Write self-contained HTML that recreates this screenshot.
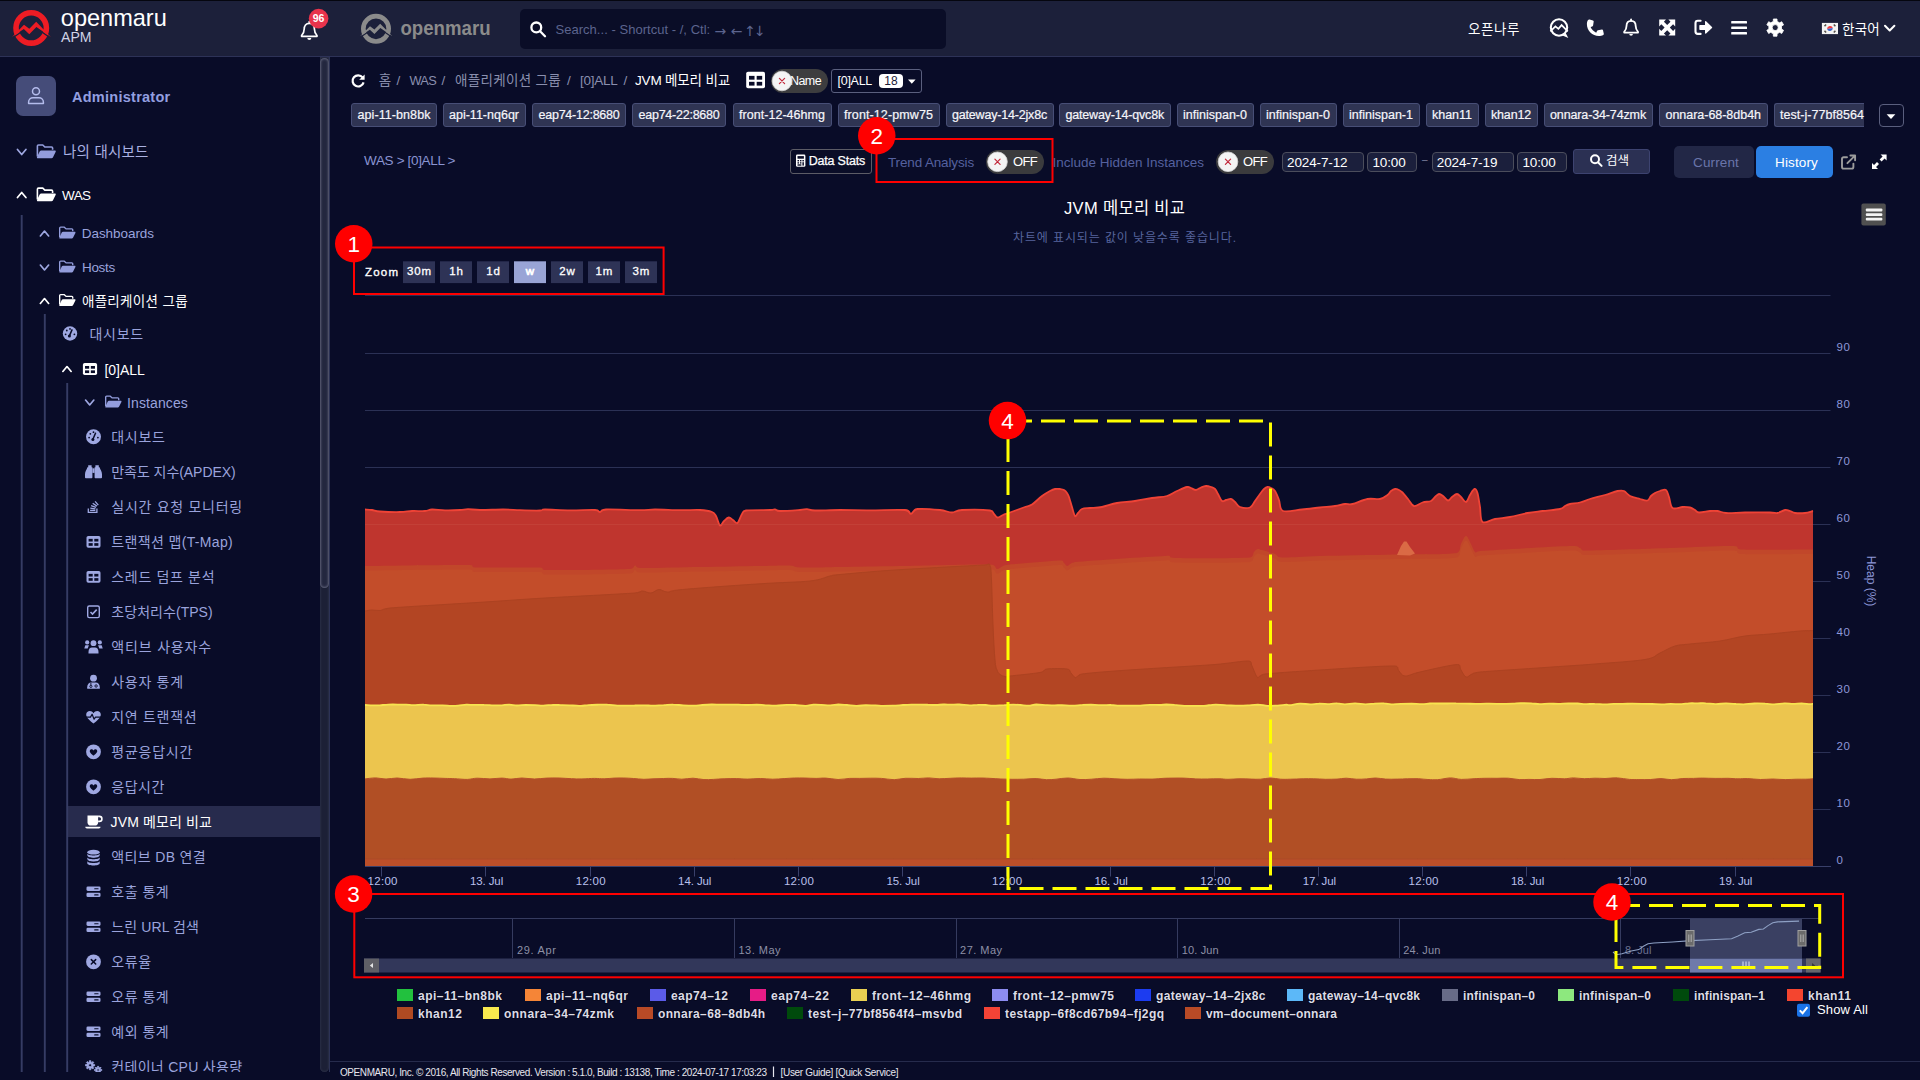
<!DOCTYPE html>
<html lang="ko"><head><meta charset="utf-8"><title>OPENMARU APM - JVM 메모리 비교</title>
<style>
html,body{margin:0;padding:0;}
body{width:1920px;height:1080px;overflow:hidden;background:#090c28;font-family:"Liberation Sans","Noto Sans CJK KR",sans-serif;position:relative;}
.t{position:absolute;white-space:nowrap;display:block;}
.b{position:absolute;box-sizing:border-box;display:block;}
svg text{font-family:"Liberation Sans","Noto Sans CJK KR",sans-serif;}
</style></head>
<body>
<div class="b " style="left:0.00px;top:0.00px;width:1920.00px;height:57.00px;background:#1c203a;border-top:1px solid #05060f;border-bottom:1px solid #2d3257;"></div>
<div class="b " style="left:520.00px;top:9.00px;width:426.00px;height:39.50px;background:#0a0d27;border-radius:5px;"></div>
<span class="t" id="t1" style="top:22.93px;font-size:13px;line-height:13px;color:#5c648e;letter-spacing:0.029px;left:555.50px;">Search... - Shortcut - /, Ctl:</span>
<span class="t" id="t2" style="top:23.54px;font-size:14px;line-height:14px;color:#5c648e;font-family:'DejaVu Sans',sans-serif;left:714.60px;">→ ← <span style="margin-left:-2.7px">↑</span> <span style="margin-left:-6.4px">↓</span></span>
<span class="t" id="t3" style="top:22.98px;font-size:13.5px;line-height:13.5px;color:#ffffff;letter-spacing:0.578px;left:1468.00px;">오픈나루</span>
<span class="t" id="t4" style="top:23.09px;font-size:13.5px;line-height:13.5px;color:#ffffff;letter-spacing:0.245px;left:1842.00px;">한국어</span>
<svg class="b" style="left:0;top:0" width="1920" height="57" viewBox="0 0 1920 57"><g transform="translate(31.20 27.90)"><circle cx="0" cy="0" r="15.20" fill="none" stroke="#ed1c24" stroke-width="5.60"/><path d="M-18.80,10.10 L-7.40,2.40 L-1.90,7.50 L5.20,0.20 L19.30,10.10" fill="none" stroke="#1c203a" stroke-width="1.30"/><path d="M-19.20,9.00 L-7.20,-3.20 L-1.90,0.80 L5.00,-6.10 L19.70,9.00 L5.20,-1.00 L-1.90,6.30 L-7.40,1.20 Z" fill="#ed1c24"/></g><g transform="translate(376.00 28.80)"><circle cx="0" cy="0" r="12.67" fill="none" stroke="#8b8b8b" stroke-width="4.67"/><path d="M-15.67,8.42 L-6.17,2.00 L-1.58,6.25 L4.33,0.17 L16.08,8.42" fill="none" stroke="#1c203a" stroke-width="1.08"/><path d="M-16.00,7.50 L-6.00,-2.67 L-1.58,0.67 L4.17,-5.08 L16.42,7.50 L4.33,-0.83 L-1.58,5.25 L-6.17,1.00 Z" fill="#8b8b8b"/></g><text x="60.8" y="25.8" font-size="23.4" fill="#ffffff" textLength="106" lengthAdjust="spacingAndGlyphs">openmaru</text><text x="61" y="42" font-size="14.6" fill="#d0d3e6" textLength="30.5" lengthAdjust="spacingAndGlyphs">APM</text><text x="400.5" y="35" font-size="21" font-weight="700" fill="#8b8b8b" textLength="90" lengthAdjust="spacingAndGlyphs">openmaru</text><g transform="translate(300.30 20.60) scale(1.000)" fill="none" stroke="#fff" stroke-width="1.70" stroke-linejoin="round" stroke-linecap="round"><path d="M9 1 V2.6"/><path d="M9 2.7 C5.7 2.7 3.9 5.3 3.9 8.5 C3.9 12 2.7 13.5 1.3 14.9 V15.7 H16.7 V14.9 C15.3 13.5 14.1 12 14.1 8.5 C14.1 5.3 12.3 2.7 9 2.7 Z"/><path d="M7 17.3 A2 2 0 0 0 11 17.3 Z" fill="#fff" stroke="none"/></g><circle cx="318.6" cy="18.6" r="9.8" fill="#e8334c"/><text x="318.6" y="22.2" font-size="10.5" font-weight="700" fill="#fff" text-anchor="middle">96</text><g fill="none" stroke="#fff" stroke-width="2.3" stroke-linecap="round"><circle cx="536.3" cy="27.4" r="4.9"/><path d="M540.1 31.3 L545 36.2"/></g><g transform="translate(1559.00 28.30)"><circle cx="0" cy="-0.8" r="8.20" fill="none" stroke="#fff" stroke-width="2.1"/><path d="M3.5 7.2 L9.3 9.6 L6.7 4.6 Z" fill="#fff"/><path d="M-8.6 3 L-3.6 -2 L-0.6 0.6 L2.6 -3.2 L8.8 3" fill="none" stroke="#fff" stroke-width="1.7" stroke-linejoin="miter"/></g><path transform="translate(1586 19.2) scale(1.0)" d="M3.6 0.4 L7 1.2 C7.5 1.3 7.8 1.8 7.7 2.3 L7.1 6.2 C7 6.7 6.7 7 6.3 7.2 L4.6 7.9 C5.6 10.4 7.6 12.4 10.2 13.5 L11 11.8 C11.2 11.4 11.6 11.1 12 11 L15.9 10.4 C16.4 10.3 16.9 10.6 17 11.1 L17.8 14.5 C17.9 15 17.7 15.5 17.2 15.7 C15.9 16.4 14.4 16.9 12.9 16.9 C6.2 16.9 0.9 11.5 0.9 4.9 C0.9 3.4 1.3 1.9 2.1 0.9 C2.4 0.4 3 0.2 3.6 0.4 Z" fill="#fff"/><g transform="translate(1623.00 18.40) scale(0.900)" fill="none" stroke="#fff" stroke-width="2.00" stroke-linejoin="round" stroke-linecap="round"><path d="M9 1 V2.6"/><path d="M9 2.7 C5.7 2.7 3.9 5.3 3.9 8.5 C3.9 12 2.7 13.5 1.3 14.9 V15.7 H16.7 V14.9 C15.3 13.5 14.1 12 14.1 8.5 C14.1 5.3 12.3 2.7 9 2.7 Z"/><path d="M7 17.3 A2 2 0 0 0 11 17.3 Z" fill="#fff" stroke="none"/></g><g transform="translate(1659.20 19.60) scale(1.000)" fill="#fff"><path d="M0 0 H6.8 L4.7 2.1 L8 5.4 L11.3 2.1 L9.2 0 H16 V6.8 L13.9 4.7 L10.6 8 L13.9 11.3 L16 9.2 V16 H9.2 L11.3 13.9 L8 10.6 L4.7 13.9 L6.8 16 H0 V9.2 L2.1 11.3 L5.4 8 L2.1 4.7 L0 6.8 Z"/></g><g transform="translate(1694.4 19.6)"><path d="M6.2 1.2 H3.4 C2.1 1.2 1.1 2.2 1.1 3.5 V12 C1.1 13.3 2.1 14.3 3.4 14.3 H6.2" fill="none" stroke="#fff" stroke-width="2.1" stroke-linecap="round"/><path d="M5.6 5.3 H10.6 V2.2 C10.6 1.6 11.3 1.3 11.7 1.7 L17.6 7.3 C17.9 7.6 17.9 8 17.6 8.3 L11.7 13.9 C11.3 14.3 10.6 14 10.6 13.4 V10.3 H5.6 C5.2 10.3 4.9 10 4.9 9.6 V6 C4.9 5.6 5.2 5.3 5.6 5.3 Z" fill="#fff"/></g><g fill="#fff"><rect x="1731.2" y="20.9" width="15.8" height="2.6" rx="0.6"/><rect x="1731.2" y="26.4" width="15.8" height="2.6" rx="0.6"/><rect x="1731.2" y="31.9" width="15.8" height="2.6" rx="0.6"/></g><path d="M1773.37,18.99 L1777.03,18.99 L1777.08,21.38 L1779.65,22.86 L1781.74,21.71 L1783.57,24.88 L1781.53,26.12 L1781.53,29.08 L1783.57,30.32 L1781.74,33.49 L1779.65,32.34 L1777.08,33.82 L1777.03,36.21 L1773.37,36.21 L1773.32,33.82 L1770.75,32.34 L1768.66,33.49 L1766.83,30.32 L1768.87,29.08 L1768.87,26.12 L1766.83,24.88 L1768.66,21.71 L1770.75,22.86 L1773.32,21.38 Z M1772.20 27.60 a3.00 3.00 0 1 0 6.00 0 a3.00 3.00 0 1 0 -6.00 0 Z" fill="#fff" fill-rule="evenodd" stroke="#fff" stroke-width="0.8" stroke-linejoin="round"/><g transform="translate(1821.9 22.9)"><rect x="0" y="0" width="16.1" height="11.2" fill="#f4f4f4"/><path d="M5.2 6 A2.9 2.9 0 0 1 10.9 5.2 Z" fill="#f03a3f"/><path d="M5.2 6 A2.9 2.9 0 0 0 10.9 5.2 Z" fill="#3a63c8"/><g stroke="#55504a" stroke-width="1.5"><path d="M2.6 3.4 L4.2 1.6 M11.9 1.6 L13.5 3.4 M2.6 7.8 L4.2 9.6 M11.9 9.6 L13.5 7.8"/></g></g><path d="M1885 25.8 L1889.7 30.5 L1894.4 25.8" fill="none" stroke="#fff" stroke-width="2" stroke-linecap="round" stroke-linejoin="round"/></svg>
<div class="b " style="left:0.00px;top:57.00px;width:320.00px;height:1015.00px;background:#090c28;"></div>
<div class="b " style="left:16.00px;top:76.00px;width:40.00px;height:40.00px;background:#454c79;border-radius:7px;"></div>
<span class="t" id="t5" style="top:89.89px;font-size:14.5px;line-height:14.5px;color:#939fe0;font-weight:700;letter-spacing:0.263px;left:72.00px;">Administrator</span>
<span class="t" id="t6" style="top:144.90px;font-size:14.5px;line-height:14.5px;color:#aab1e2;letter-spacing:0.232px;left:63.00px;">나의 대시보드</span>
<span class="t" id="t7" style="top:188.88px;font-size:13.5px;line-height:13.5px;color:#fff;letter-spacing:-0.583px;left:62.00px;">WAS</span>
<span class="t" id="t8" style="top:227.38px;font-size:13.5px;line-height:13.5px;color:#9aa3dc;letter-spacing:-0.060px;left:81.80px;">Dashboards</span>
<span class="t" id="t9" style="top:260.88px;font-size:13.5px;line-height:13.5px;color:#9aa3dc;letter-spacing:-0.263px;left:81.90px;">Hosts</span>
<span class="t" id="t10" style="top:294.88px;font-size:13.5px;line-height:13.5px;color:#fff;letter-spacing:0.319px;left:81.90px;">애플리케이션 그룹</span>
<span class="t" id="t11" style="top:326.64px;font-size:14px;line-height:14px;color:#9aa3dc;letter-spacing:0.767px;left:89.40px;">대시보드</span>
<span class="t" id="t12" style="top:362.64px;font-size:14px;line-height:14px;color:#fff;letter-spacing:-0.031px;left:104.50px;">[0]ALL</span>
<span class="t" id="t13" style="top:395.64px;font-size:14px;line-height:14px;color:#9aa3dc;letter-spacing:0.118px;left:127.00px;">Instances</span>
<span class="t" id="t14" style="top:430.14px;font-size:14px;line-height:14px;color:#9aa3dc;letter-spacing:0.667px;left:111.30px;">대시보드</span>
<span class="t" id="t15" style="top:465.14px;font-size:14px;line-height:14px;color:#9aa3dc;letter-spacing:-0.060px;left:111.30px;">만족도 지수(APDEX)</span>
<span class="t" id="t16" style="top:500.14px;font-size:14px;line-height:14px;color:#9aa3dc;letter-spacing:0.718px;left:111.30px;">실시간 요청 모니터링</span>
<span class="t" id="t17" style="top:535.14px;font-size:14px;line-height:14px;color:#9aa3dc;letter-spacing:0.346px;left:111.30px;">트랜잭션 맵(T-Map)</span>
<span class="t" id="t18" style="top:570.14px;font-size:14px;line-height:14px;color:#9aa3dc;letter-spacing:0.661px;left:111.30px;">스레드 덤프 분석</span>
<span class="t" id="t19" style="top:605.14px;font-size:14px;line-height:14px;color:#9aa3dc;letter-spacing:0.045px;left:111.30px;">초당처리수(TPS)</span>
<span class="t" id="t20" style="top:640.14px;font-size:14px;line-height:14px;color:#9aa3dc;letter-spacing:0.830px;left:111.30px;">액티브 사용자수</span>
<span class="t" id="t21" style="top:675.14px;font-size:14px;line-height:14px;color:#9aa3dc;letter-spacing:0.684px;left:111.30px;">사용자 통계</span>
<span class="t" id="t22" style="top:710.14px;font-size:14px;line-height:14px;color:#9aa3dc;letter-spacing:0.690px;left:111.30px;">지연 트랜잭션</span>
<span class="t" id="t23" style="top:745.14px;font-size:14px;line-height:14px;color:#9aa3dc;letter-spacing:0.753px;left:111.30px;">평균응답시간</span>
<span class="t" id="t24" style="top:780.14px;font-size:14px;line-height:14px;color:#9aa3dc;letter-spacing:0.517px;left:111.30px;">응답시간</span>
<div class="b " style="left:67.60px;top:805.60px;width:252.40px;height:31.00px;background:#272b4d;"></div>
<span class="t" id="t25" style="top:815.14px;font-size:14px;line-height:14px;color:#fff;letter-spacing:0.111px;left:110.60px;">JVM 메모리 비교</span>
<span class="t" id="t26" style="top:850.14px;font-size:14px;line-height:14px;color:#9aa3dc;letter-spacing:0.351px;left:111.30px;">액티브 DB 연결</span>
<span class="t" id="t27" style="top:885.14px;font-size:14px;line-height:14px;color:#9aa3dc;letter-spacing:0.496px;left:111.30px;">호출 통계</span>
<span class="t" id="t28" style="top:920.14px;font-size:14px;line-height:14px;color:#9aa3dc;letter-spacing:0.111px;left:111.30px;">느린 URL 검색</span>
<span class="t" id="t29" style="top:955.14px;font-size:14px;line-height:14px;color:#9aa3dc;letter-spacing:0.653px;left:111.30px;">오류율</span>
<span class="t" id="t30" style="top:990.14px;font-size:14px;line-height:14px;color:#9aa3dc;letter-spacing:0.496px;left:111.30px;">오류 통계</span>
<span class="t" id="t31" style="top:1025.14px;font-size:14px;line-height:14px;color:#9aa3dc;letter-spacing:0.496px;left:111.30px;">예외 통계</span>
<span class="t" id="t32" style="top:1060.14px;font-size:14px;line-height:14px;color:#9aa3dc;letter-spacing:0.292px;left:111.30px;">컨테이너 CPU 사용량</span>
<div class="b " style="left:320.00px;top:57.00px;width:9.00px;height:1015.00px;background:#1c2036;border-radius:0 0 4.5px 4.5px;box-shadow:inset 0 0 2px 0.6px #2f334c;"></div>
<div class="b " style="left:329.00px;top:57.00px;width:1.00px;height:1015.00px;background:#2c3255;"></div>
<div class="b " style="left:320.00px;top:58.00px;width:9.00px;height:530.00px;background:#23273f;border-radius:4.5px;box-shadow:inset 0 0 2.2px 0.9px #63667d;"></div>
<svg class="b" style="left:0;top:57px" width="320" height="1015" viewBox="0 57 320 1015"><g fill="none" stroke="#b4bcec" stroke-width="1.5"><circle cx="36" cy="91.2" r="3.5"/><path d="M28.6 103.6 V102.2 C28.6 99.6 30.6 97.8 33 97.8 H39 C41.4 97.8 43.4 99.6 43.4 102.2 V103.6 Z" stroke-linejoin="round"/></g><path d="M17.47 149.52 L21.70 154.48 L25.93 149.52" fill="none" stroke="#9fa8e2" stroke-width="1.75" stroke-linecap="round" stroke-linejoin="round"/><g transform="translate(36.60 144.20) scale(1.000)"><path d="M0.8 12.2 V1.9 C0.8 1.3 1.3 0.8 1.9 0.8 H6.2 L8.2 2.8 H14.9 C15.5 2.8 16 3.3 16 3.9 V5.6" fill="none" stroke="#939ddc" stroke-width="1.6" stroke-linejoin="round"/><path d="M4.6 6.2 H18.3 C19 6.2 19.4 6.9 19.1 7.5 L16.3 13.2 C16 13.7 15.5 14 14.9 14 H1.2 C0.5 14 0.1 13.3 0.4 12.7 L3.2 7 C3.5 6.5 4 6.2 4.6 6.2 Z" fill="#939ddc"/></g><path d="M17.47 197.48 L21.70 192.52 L25.93 197.48" fill="none" stroke="#fff" stroke-width="1.75" stroke-linecap="round" stroke-linejoin="round"/><g transform="translate(36.60 187.30) scale(1.000)"><path d="M0.8 12.2 V1.9 C0.8 1.3 1.3 0.8 1.9 0.8 H6.2 L8.2 2.8 H14.9 C15.5 2.8 16 3.3 16 3.9 V5.6" fill="none" stroke="#fff" stroke-width="1.6" stroke-linejoin="round"/><path d="M4.6 6.2 H18.3 C19 6.2 19.4 6.9 19.1 7.5 L16.3 13.2 C16 13.7 15.5 14 14.9 14 H1.2 C0.5 14 0.1 13.3 0.4 12.7 L3.2 7 C3.5 6.5 4 6.2 4.6 6.2 Z" fill="#fff"/></g><path d="M40.36 235.93 L44.50 231.07 L48.64 235.93" fill="none" stroke="#9fa8e2" stroke-width="1.71" stroke-linecap="round" stroke-linejoin="round"/><g transform="translate(59.00 226.48) scale(0.859)"><path d="M0.8 12.2 V1.9 C0.8 1.3 1.3 0.8 1.9 0.8 H6.2 L8.2 2.8 H14.9 C15.5 2.8 16 3.3 16 3.9 V5.6" fill="none" stroke="#939ddc" stroke-width="1.6" stroke-linejoin="round"/><path d="M4.6 6.2 H18.3 C19 6.2 19.4 6.9 19.1 7.5 L16.3 13.2 C16 13.7 15.5 14 14.9 14 H1.2 C0.5 14 0.1 13.3 0.4 12.7 L3.2 7 C3.5 6.5 4 6.2 4.6 6.2 Z" fill="#939ddc"/></g><path d="M40.36 265.07 L44.50 269.93 L48.64 265.07" fill="none" stroke="#9fa8e2" stroke-width="1.71" stroke-linecap="round" stroke-linejoin="round"/><g transform="translate(59.00 260.48) scale(0.859)"><path d="M0.8 12.2 V1.9 C0.8 1.3 1.3 0.8 1.9 0.8 H6.2 L8.2 2.8 H14.9 C15.5 2.8 16 3.3 16 3.9 V5.6" fill="none" stroke="#939ddc" stroke-width="1.6" stroke-linejoin="round"/><path d="M4.6 6.2 H18.3 C19 6.2 19.4 6.9 19.1 7.5 L16.3 13.2 C16 13.7 15.5 14 14.9 14 H1.2 C0.5 14 0.1 13.3 0.4 12.7 L3.2 7 C3.5 6.5 4 6.2 4.6 6.2 Z" fill="#939ddc"/></g><path d="M40.36 303.43 L44.50 298.57 L48.64 303.43" fill="none" stroke="#fff" stroke-width="1.71" stroke-linecap="round" stroke-linejoin="round"/><g transform="translate(59.00 293.98) scale(0.859)"><path d="M0.8 12.2 V1.9 C0.8 1.3 1.3 0.8 1.9 0.8 H6.2 L8.2 2.8 H14.9 C15.5 2.8 16 3.3 16 3.9 V5.6" fill="none" stroke="#fff" stroke-width="1.6" stroke-linejoin="round"/><path d="M4.6 6.2 H18.3 C19 6.2 19.4 6.9 19.1 7.5 L16.3 13.2 C16 13.7 15.5 14 14.9 14 H1.2 C0.5 14 0.1 13.3 0.4 12.7 L3.2 7 C3.5 6.5 4 6.2 4.6 6.2 Z" fill="#fff"/></g><circle cx="70.00" cy="333.50" r="7.20" fill="#9fa8e2"/><g stroke="#090c28" fill="#090c28"><path d="M69.40 335.90 L72.00 329.90" stroke-width="1.5" stroke-linecap="round"/><circle cx="69.40" cy="336.10" r="1.5" stroke="none"/><circle cx="65.60" cy="334.30" r="0.9" stroke="none"/><circle cx="66.80" cy="330.50" r="0.9" stroke="none"/><circle cx="70.00" cy="328.90" r="0.9" stroke="none"/><circle cx="74.40" cy="334.30" r="0.9" stroke="none"/></g><path d="M62.86 371.43 L67.00 366.57 L71.14 371.43" fill="none" stroke="#fff" stroke-width="1.71" stroke-linecap="round" stroke-linejoin="round"/><g><rect x="82.90" y="363.00" width="14.20" height="12.00" rx="1.8" fill="#fff"/><g fill="#090c28"><rect x="85.03" y="366.00" width="4.15" height="2.72"/><rect x="90.82" y="366.00" width="4.15" height="2.72"/><rect x="85.03" y="370.36" width="4.15" height="2.72"/><rect x="90.82" y="370.36" width="4.15" height="2.72"/></g></g><path d="M85.56 400.07 L89.70 404.93 L93.84 400.07" fill="none" stroke="#9fa8e2" stroke-width="1.71" stroke-linecap="round" stroke-linejoin="round"/><g transform="translate(105.00 395.48) scale(0.859)"><path d="M0.8 12.2 V1.9 C0.8 1.3 1.3 0.8 1.9 0.8 H6.2 L8.2 2.8 H14.9 C15.5 2.8 16 3.3 16 3.9 V5.6" fill="none" stroke="#939ddc" stroke-width="1.6" stroke-linejoin="round"/><path d="M4.6 6.2 H18.3 C19 6.2 19.4 6.9 19.1 7.5 L16.3 13.2 C16 13.7 15.5 14 14.9 14 H1.2 C0.5 14 0.1 13.3 0.4 12.7 L3.2 7 C3.5 6.5 4 6.2 4.6 6.2 Z" fill="#939ddc"/></g><circle cx="93.50" cy="436.80" r="7.50" fill="#9fa8e2"/><g stroke="#090c28" fill="#090c28"><path d="M92.90 439.20 L95.50 433.20" stroke-width="1.5" stroke-linecap="round"/><circle cx="92.90" cy="439.40" r="1.5" stroke="none"/><circle cx="89.10" cy="437.60" r="0.9" stroke="none"/><circle cx="90.30" cy="433.80" r="0.9" stroke="none"/><circle cx="93.50" cy="432.20" r="0.9" stroke="none"/><circle cx="97.90" cy="437.60" r="0.9" stroke="none"/></g><g transform="translate(85.00 465.30)" fill="#9fa8e2"><path d="M3.2 0 H6.6 V2 H7.4 V12.2 C7.4 12.7 7 13 6.6 13 H0.8 C0.4 13 0 12.7 0 12.2 V9 C0 6 1.8 4.6 2.4 2 H3.2 Z"/><path d="M10.4 0 H13.8 V2 H14.6 C15.2 4.6 17 6 17 9 V12.2 C17 12.7 16.6 13 16.2 13 H10.4 C10 13 9.6 12.7 9.6 12.2 V2 H10.4 Z"/><rect x="7.4" y="3" width="2.2" height="4.6"/></g><g transform="translate(87.50 500.50)" fill="none" stroke="#9fa8e2" stroke-width="1.3"><path d="M0.8 8 V11.8 H9.4 V8"/><path d="M2.6 9.9 H7.8 M2.8 7.6 L7.9 8.3 M3.6 5.2 L8.4 6.9 M5.2 2.8 L9.4 5.6 M7.6 0.8 L10.8 4.6"/></g><g><rect x="86.50" y="535.90" width="14.00" height="11.80" rx="1.8" fill="#9fa8e2"/><g fill="#090c28"><rect x="88.60" y="538.85" width="4.10" height="2.68"/><rect x="94.30" y="538.85" width="4.10" height="2.68"/><rect x="88.60" y="543.14" width="4.10" height="2.68"/><rect x="94.30" y="543.14" width="4.10" height="2.68"/></g></g><g><rect x="86.50" y="570.90" width="14.00" height="11.80" rx="1.8" fill="#9fa8e2"/><g fill="#090c28"><rect x="88.60" y="573.85" width="4.10" height="2.68"/><rect x="94.30" y="573.85" width="4.10" height="2.68"/><rect x="88.60" y="578.14" width="4.10" height="2.68"/><rect x="94.30" y="578.14" width="4.10" height="2.68"/></g></g><rect x="87.70" y="606.00" width="11.6" height="11.6" rx="1.6" fill="none" stroke="#9fa8e2" stroke-width="1.4"/><path d="M90.50 612.00 L92.50 614.00 L96.70 609.60" fill="none" stroke="#9fa8e2" stroke-width="1.6"/><g fill="#9fa8e2"><circle cx="93.50" cy="643.20" r="2.9"/><path d="M88.50 652.00 C88.50 648.80 90.10 647.40 91.90 647.40 H95.10 C96.90 647.40 98.50 648.80 98.50 652.00 V653.60 H88.50 Z"/><circle cx="87.20" cy="642.40" r="2.1"/><path d="M88.90 645.30 L85.30 645.30 L84.30 648.60 L87.70 648.60 Z"/><circle cx="99.80" cy="642.40" r="2.1"/><path d="M98.10 645.30 L101.70 645.30 L102.70 648.60 L99.30 648.60 Z"/></g><g fill="#9fa8e2"><circle cx="93.50" cy="678.20" r="3.4"/><path d="M87.20 687.20 C87.20 684.00 89.10 682.40 91.10 682.40 H95.90 C97.90 682.40 99.80 684.00 99.80 687.20 V688.80 H87.20 Z"/></g><g fill="none" stroke="#090c28" stroke-width="0.9"><circle cx="90.90" cy="686.40" r="1.1"/><path d="M90.90 682.80 V685.20"/><circle cx="96.10" cy="686.00" r="1.2"/></g><path d="M93.50 723.50 C92.28 722.52 86.18 718.13 86.18 714.72 C86.18 710.57 91.55 709.84 93.50 713.25 C95.45 709.84 100.82 710.57 100.82 714.72 C100.82 718.13 94.72 722.52 93.50 723.50 Z" fill="#9fa8e2"/><path d="M85.90 717.10 H90.50 L92.10 714.20 L94.10 719.20 L95.50 717.10 H101.10" fill="none" stroke="#090c28" stroke-width="1.2" stroke-linejoin="round"/><circle cx="93.50" cy="751.80" r="7.4" fill="#9fa8e2"/><path d="M93.50 755.60 C92.88 755.10 89.78 752.87 89.78 751.14 C89.78 749.03 92.51 748.66 93.50 750.39 C94.49 748.66 97.22 749.03 97.22 751.14 C97.22 752.87 94.12 755.10 93.50 755.60 Z" fill="#090c28"/><circle cx="93.50" cy="786.80" r="7.4" fill="#9fa8e2"/><path d="M93.50 790.60 C92.88 790.10 89.78 787.87 89.78 786.14 C89.78 784.03 92.51 783.66 93.50 785.39 C94.49 783.66 97.22 784.03 97.22 786.14 C97.22 787.87 94.12 790.10 93.50 790.60 Z" fill="#090c28"/><g transform="translate(84.90 815.40)"><path d="M2.6 0 H13.2 V7 C13.2 8.8 11.8 10.2 10 10.2 H5.8 C4 10.2 2.6 8.8 2.6 7 Z" fill="#fff"/><path d="M13.2 1 H14.4 C15.9 1 17 2.1 17 3.5 C17 4.9 15.9 6 14.4 6 H13.2" fill="none" stroke="#fff" stroke-width="1.6"/><path d="M0.4 11.4 H15.6 C15.6 12.3 14.9 13 14 13 H2 C1.1 13 0.4 12.3 0.4 11.4 Z" fill="#fff"/></g><g fill="#9fa8e2"><ellipse cx="93.50" cy="852.20" rx="6.2" ry="2.4"/><path d="M87.30 853.60 C87.30 856.20 99.70 856.20 99.70 853.60 V855.80 C99.70 858.80 87.30 858.80 87.30 855.80 Z"/><path d="M87.30 857.30 C87.30 859.90 99.70 859.90 99.70 857.30 V859.50 C99.70 862.50 87.30 862.50 87.30 859.50 Z"/><path d="M87.30 861.00 C87.30 863.60 99.70 863.60 99.70 861.00 V863.20 C99.70 866.20 87.30 866.20 87.30 863.20 Z"/></g><g fill="none" stroke="#090c28" stroke-width="0.9"><path d="M87.10 855.60 C87.10 859.20 99.90 859.20 99.90 855.60"/><path d="M87.10 859.40 C87.10 863.00 99.90 863.00 99.90 859.40"/></g><g fill="#9fa8e2"><rect x="86.50" y="886.50" width="14" height="4.4" rx="1.3"/><rect x="86.50" y="892.70" width="14" height="4.4" rx="1.3"/></g><g stroke="#090c28" stroke-width="1.1" stroke-linecap="round"><path d="M94.70 888.70 H98.10 M94.70 894.90 H98.10"/></g><g fill="#9fa8e2"><rect x="86.50" y="921.50" width="14" height="4.4" rx="1.3"/><rect x="86.50" y="927.70" width="14" height="4.4" rx="1.3"/></g><g stroke="#090c28" stroke-width="1.1" stroke-linecap="round"><path d="M94.70 923.70 H98.10 M94.70 929.90 H98.10"/></g><circle cx="93.50" cy="961.80" r="7.4" fill="#9fa8e2"/><path d="M91.30 959.60 L95.70 964.00 M95.70 959.60 L91.30 964.00" stroke="#090c28" stroke-width="1.5" stroke-linecap="round"/><g fill="#9fa8e2"><rect x="86.50" y="991.50" width="14" height="4.4" rx="1.3"/><rect x="86.50" y="997.70" width="14" height="4.4" rx="1.3"/></g><g stroke="#090c28" stroke-width="1.1" stroke-linecap="round"><path d="M94.70 993.70 H98.10 M94.70 999.90 H98.10"/></g><g fill="#9fa8e2"><rect x="86.50" y="1026.50" width="14" height="4.4" rx="1.3"/><rect x="86.50" y="1032.70" width="14" height="4.4" rx="1.3"/></g><g stroke="#090c28" stroke-width="1.1" stroke-linecap="round"><path d="M94.70 1028.70 H98.10 M94.70 1034.90 H98.10"/></g><path d="M89.38,1060.66 L90.82,1060.66 L90.82,1061.98 L91.87,1062.41 L92.80,1061.48 L93.82,1062.50 L92.89,1063.43 L93.32,1064.48 L94.64,1064.48 L94.64,1065.92 L93.32,1065.92 L92.89,1066.97 L93.82,1067.90 L92.80,1068.92 L91.87,1067.99 L90.82,1068.42 L90.82,1069.74 L89.38,1069.74 L89.38,1068.42 L88.33,1067.99 L87.40,1068.92 L86.38,1067.90 L87.31,1066.97 L86.88,1065.92 L85.56,1065.92 L85.56,1064.48 L86.88,1064.48 L87.31,1063.43 L86.38,1062.50 L87.40,1061.48 L88.33,1062.41 L89.38,1061.98 Z M88.60 1065.20 a1.50 1.50 0 1 0 3.00 0 a1.50 1.50 0 1 0 -3.00 0 Z" fill="#9fa8e2" fill-rule="evenodd" stroke="#9fa8e2" stroke-width="0.8" stroke-linejoin="round"/><path d="M97.52,1066.35 L98.68,1066.35 L98.67,1067.46 L99.49,1067.80 L100.27,1067.01 L101.09,1067.83 L100.30,1068.61 L100.64,1069.43 L101.75,1069.42 L101.75,1070.58 L100.64,1070.57 L100.30,1071.39 L101.09,1072.17 L100.27,1072.99 L99.49,1072.20 L98.67,1072.54 L98.68,1073.65 L97.52,1073.65 L97.53,1072.54 L96.71,1072.20 L95.93,1072.99 L95.11,1072.17 L95.90,1071.39 L95.56,1070.57 L94.45,1070.58 L94.45,1069.42 L95.56,1069.43 L95.90,1068.61 L95.11,1067.83 L95.93,1067.01 L96.71,1067.80 L97.53,1067.46 Z M96.90 1070.00 a1.20 1.20 0 1 0 2.40 0 a1.20 1.20 0 1 0 -2.40 0 Z" fill="#9fa8e2" fill-rule="evenodd" stroke="#9fa8e2" stroke-width="0.8" stroke-linejoin="round"/><g stroke="#363c64" stroke-width="1.9"><path d="M21.7 215 V1072 M44.8 314 V1072 M67.2 383 V1072"/></g></svg>
<div class="b " style="left:0.00px;top:1072.00px;width:330.00px;height:8.00px;background:#090c28;"></div>
<span class="t" id="t33" style="top:74.39px;font-size:13.5px;line-height:13.5px;color:#8a8fae;letter-spacing:-0.222px;left:378.80px;">홈</span>
<span class="t" id="t34" style="top:74.39px;font-size:13.5px;line-height:13.5px;color:#8a8fae;left:396.50px;">/</span>
<span class="t" id="t35" style="top:74.73px;font-size:12.8px;line-height:12.8px;color:#8a8fae;letter-spacing:-0.729px;left:409.50px;">WAS</span>
<span class="t" id="t36" style="top:74.39px;font-size:13.5px;line-height:13.5px;color:#8a8fae;left:441.50px;">/</span>
<span class="t" id="t37" style="top:74.39px;font-size:13.5px;line-height:13.5px;color:#8a8fae;letter-spacing:0.319px;left:455.00px;">애플리케이션 그룹</span>
<span class="t" id="t38" style="top:74.39px;font-size:13.5px;line-height:13.5px;color:#8a8fae;left:567.00px;">/</span>
<span class="t" id="t39" style="top:74.39px;font-size:13.5px;line-height:13.5px;color:#8a8fae;letter-spacing:-0.255px;left:580.00px;">[0]ALL</span>
<span class="t" id="t40" style="top:74.39px;font-size:13.5px;line-height:13.5px;color:#8a8fae;left:623.50px;">/</span>
<span class="t" id="t41" style="top:74.39px;font-size:13.5px;line-height:13.5px;color:#fff;letter-spacing:-0.161px;left:635.00px;">JVM 메모리 비교</span>
<div class="b " style="left:770.50px;top:69.00px;width:57.00px;height:23.50px;background:#3d3d3f;border-radius:12px;"></div>
<span class="t" id="t42" style="top:74.88px;font-size:12.5px;line-height:12.5px;color:#fff;letter-spacing:-0.586px;left:790.00px;">Name</span>
<div class="b " style="left:831.00px;top:69.00px;width:90.80px;height:23.50px;border:1px solid #5a5f7e;border-radius:3px;"></div>
<span class="t" id="t43" style="top:74.88px;font-size:12.5px;line-height:12.5px;color:#fff;letter-spacing:-0.273px;left:837.50px;">[0]ALL</span>
<div class="b " style="left:879.00px;top:74.00px;width:24.00px;height:13.60px;background:#fff;border-radius:4px;"></div>
<span class="t" id="t44" style="top:75.12px;font-size:12px;line-height:12px;color:#1c2039;left:891.00px;transform:translateX(-50%);">18</span>
<div class="b " style="left:351.00px;top:103.00px;width:86.00px;height:23.80px;background:#2f3453;border:1px solid #474e76;border-radius:3px;"></div>
<span class="t" id="t45" style="top:108.88px;font-size:12.5px;line-height:12.5px;color:#f6f6fa;letter-spacing:0.079px;left:357.50px;-webkit-text-stroke:0.2px #f6f6fa;">api-11-bn8bk</span>
<div class="b " style="left:442.50px;top:103.00px;width:83.00px;height:23.80px;background:#2f3453;border:1px solid #474e76;border-radius:3px;"></div>
<span class="t" id="t46" style="top:108.88px;font-size:12.5px;line-height:12.5px;color:#f6f6fa;letter-spacing:0.004px;left:449.00px;-webkit-text-stroke:0.2px #f6f6fa;">api-11-nq6qr</span>
<div class="b " style="left:532.00px;top:103.00px;width:94.00px;height:23.80px;background:#2f3453;border:1px solid #474e76;border-radius:3px;"></div>
<span class="t" id="t47" style="top:108.88px;font-size:12.5px;line-height:12.5px;color:#f6f6fa;letter-spacing:-0.239px;left:538.50px;-webkit-text-stroke:0.2px #f6f6fa;">eap74-12:8680</span>
<div class="b " style="left:632.00px;top:103.00px;width:94.00px;height:23.80px;background:#2f3453;border:1px solid #474e76;border-radius:3px;"></div>
<span class="t" id="t48" style="top:108.88px;font-size:12.5px;line-height:12.5px;color:#f6f6fa;letter-spacing:-0.239px;left:638.50px;-webkit-text-stroke:0.2px #f6f6fa;">eap74-22:8680</span>
<div class="b " style="left:732.50px;top:103.00px;width:99.00px;height:23.80px;background:#2f3453;border:1px solid #474e76;border-radius:3px;"></div>
<span class="t" id="t49" style="top:108.88px;font-size:12.5px;line-height:12.5px;color:#f6f6fa;letter-spacing:0.038px;left:739.00px;-webkit-text-stroke:0.2px #f6f6fa;">front-12-46hmg</span>
<div class="b " style="left:837.50px;top:103.00px;width:102.00px;height:23.80px;background:#2f3453;border:1px solid #474e76;border-radius:3px;"></div>
<span class="t" id="t50" style="top:108.88px;font-size:12.5px;line-height:12.5px;color:#f6f6fa;letter-spacing:0.104px;left:844.00px;-webkit-text-stroke:0.2px #f6f6fa;">front-12-pmw75</span>
<div class="b " style="left:945.50px;top:103.00px;width:108.00px;height:23.80px;background:#2f3453;border:1px solid #474e76;border-radius:3px;"></div>
<span class="t" id="t51" style="top:108.88px;font-size:12.5px;line-height:12.5px;color:#f6f6fa;letter-spacing:-0.186px;left:952.00px;-webkit-text-stroke:0.2px #f6f6fa;">gateway-14-2jx8c</span>
<div class="b " style="left:1059.00px;top:103.00px;width:111.50px;height:23.80px;background:#2f3453;border:1px solid #474e76;border-radius:3px;"></div>
<span class="t" id="t52" style="top:108.88px;font-size:12.5px;line-height:12.5px;color:#f6f6fa;letter-spacing:-0.185px;left:1065.50px;-webkit-text-stroke:0.2px #f6f6fa;">gateway-14-qvc8k</span>
<div class="b " style="left:1176.50px;top:103.00px;width:77.00px;height:23.80px;background:#2f3453;border:1px solid #474e76;border-radius:3px;"></div>
<span class="t" id="t53" style="top:108.88px;font-size:12.5px;line-height:12.5px;color:#f6f6fa;letter-spacing:0.005px;left:1183.00px;-webkit-text-stroke:0.2px #f6f6fa;">infinispan-0</span>
<div class="b " style="left:1259.50px;top:103.00px;width:77.00px;height:23.80px;background:#2f3453;border:1px solid #474e76;border-radius:3px;"></div>
<span class="t" id="t54" style="top:108.88px;font-size:12.5px;line-height:12.5px;color:#f6f6fa;letter-spacing:0.005px;left:1266.00px;-webkit-text-stroke:0.2px #f6f6fa;">infinispan-0</span>
<div class="b " style="left:1342.50px;top:103.00px;width:77.00px;height:23.80px;background:#2f3453;border:1px solid #474e76;border-radius:3px;"></div>
<span class="t" id="t55" style="top:108.88px;font-size:12.5px;line-height:12.5px;color:#f6f6fa;letter-spacing:0.005px;left:1349.00px;-webkit-text-stroke:0.2px #f6f6fa;">infinispan-1</span>
<div class="b " style="left:1425.50px;top:103.00px;width:53.00px;height:23.80px;background:#2f3453;border:1px solid #474e76;border-radius:3px;"></div>
<span class="t" id="t56" style="top:108.88px;font-size:12.5px;line-height:12.5px;color:#f6f6fa;letter-spacing:-0.016px;left:1432.00px;-webkit-text-stroke:0.2px #f6f6fa;">khan11</span>
<div class="b " style="left:1484.50px;top:103.00px;width:53.00px;height:23.80px;background:#2f3453;border:1px solid #474e76;border-radius:3px;"></div>
<span class="t" id="t57" style="top:108.88px;font-size:12.5px;line-height:12.5px;color:#f6f6fa;letter-spacing:-0.169px;left:1491.00px;-webkit-text-stroke:0.2px #f6f6fa;">khan12</span>
<div class="b " style="left:1543.50px;top:103.00px;width:109.00px;height:23.80px;background:#2f3453;border:1px solid #474e76;border-radius:3px;"></div>
<span class="t" id="t58" style="top:108.88px;font-size:12.5px;line-height:12.5px;color:#f6f6fa;letter-spacing:-0.131px;left:1550.00px;-webkit-text-stroke:0.2px #f6f6fa;">onnara-34-74zmk</span>
<div class="b " style="left:1659.00px;top:103.00px;width:108.50px;height:23.80px;background:#2f3453;border:1px solid #474e76;border-radius:3px;"></div>
<span class="t" id="t59" style="top:108.88px;font-size:12.5px;line-height:12.5px;color:#f6f6fa;letter-spacing:-0.028px;left:1665.50px;-webkit-text-stroke:0.2px #f6f6fa;">onnara-68-8db4h</span>
<div class="b " style="left:1773.50px;top:103.00px;width:90.50px;height:23.80px;background:#2f3453;border:1px solid #474e76;border-right:none;border-radius:3px 0 0 3px;"></div>
<span class="t" id="t60" style="top:108.88px;font-size:12.5px;line-height:12.5px;color:#f6f6fa;letter-spacing:0.041px;left:1780.00px;-webkit-text-stroke:0.2px #f6f6fa;">test-j-77bf8564</span>
<div class="b " style="left:1878.50px;top:104.00px;width:25.00px;height:23.00px;border:1px solid #5a5f7e;border-radius:4px;background:#0b0e2a;"></div>
<span class="t" id="t61" style="top:153.88px;font-size:13.5px;line-height:13.5px;color:#8a94d2;letter-spacing:-0.341px;left:364.00px;">WAS &gt; [0]ALL &gt;</span>
<div class="b " style="left:790.00px;top:149.00px;width:82.00px;height:24.80px;border:1px solid #5c5c66;border-radius:3px;background:#0a0d27;"></div>
<span class="t" id="t62" style="top:155.18px;font-size:12.5px;line-height:12.5px;color:#fff;letter-spacing:-0.217px;left:808.80px;-webkit-text-stroke:0.25px #fff;">Data Stats</span>
<span class="t" id="t63" style="top:156.08px;font-size:13.5px;line-height:13.5px;color:#55619f;letter-spacing:-0.146px;left:888.00px;">Trend Analysis</span>
<div class="b " style="left:985.50px;top:150.00px;width:58.30px;height:23.80px;background:#3b3b3d;border-radius:12px;"></div>
<span class="t" id="t64" style="top:155.13px;font-size:13px;line-height:13px;color:#fff;letter-spacing:-0.667px;left:1013.00px;">OFF</span>
<span class="t" id="t65" style="top:156.08px;font-size:13.5px;line-height:13.5px;color:#55619f;letter-spacing:-0.005px;left:1052.50px;">Include Hidden Instances</span>
<div class="b " style="left:1216.00px;top:150.00px;width:57.80px;height:23.80px;background:#3b3b3d;border-radius:12px;"></div>
<span class="t" id="t66" style="top:155.13px;font-size:13px;line-height:13px;color:#fff;letter-spacing:-0.667px;left:1243.00px;">OFF</span>
<div class="b " style="left:1282.00px;top:152.00px;width:81.80px;height:19.80px;background:#1b1f3c;border:1px solid #4b4d5c;border-radius:4px;"></div>
<span class="t" id="t67" style="top:156.19px;font-size:13.5px;line-height:13.5px;color:#fff;letter-spacing:-0.118px;left:1287.00px;">2024-7-12</span>
<div class="b " style="left:1367.00px;top:152.00px;width:49.80px;height:19.80px;background:#1b1f3c;border:1px solid #4b4d5c;border-radius:4px;"></div>
<span class="t" id="t68" style="top:156.19px;font-size:13.5px;line-height:13.5px;color:#fff;letter-spacing:-0.159px;left:1372.50px;">10:00</span>
<span class="t" id="t69" style="top:154.70px;font-size:10px;line-height:10px;color:#7e83a2;left:1422.00px;">–</span>
<div class="b " style="left:1432.00px;top:152.00px;width:81.80px;height:19.80px;background:#1b1f3c;border:1px solid #4b4d5c;border-radius:4px;"></div>
<span class="t" id="t70" style="top:156.19px;font-size:13.5px;line-height:13.5px;color:#fff;letter-spacing:-0.118px;left:1436.80px;">2024-7-19</span>
<div class="b " style="left:1517.00px;top:152.00px;width:49.80px;height:19.80px;background:#1b1f3c;border:1px solid #4b4d5c;border-radius:4px;"></div>
<span class="t" id="t71" style="top:156.19px;font-size:13.5px;line-height:13.5px;color:#fff;letter-spacing:-0.159px;left:1522.50px;">10:00</span>
<div class="b " style="left:1573.00px;top:148.80px;width:77.00px;height:25.00px;background:#2b3053;border:1px solid #3d4370;border-radius:3px;"></div>
<span class="t" id="t72" style="top:155.18px;font-size:12.5px;line-height:12.5px;color:#fff;letter-spacing:-0.008px;left:1606.00px;">검색</span>
<div class="b " style="left:1674.00px;top:146.00px;width:80.00px;height:32.00px;background:#222746;border-radius:5px;"></div>
<span class="t" id="t73" style="top:155.88px;font-size:13.5px;line-height:13.5px;color:#6a75ab;letter-spacing:0.141px;left:1693.00px;">Current</span>
<div class="b " style="left:1756.00px;top:146.00px;width:77.00px;height:32.00px;background:#2b7fe3;border-radius:5px;"></div>
<span class="t" id="t74" style="top:155.88px;font-size:13.5px;line-height:13.5px;color:#fff;letter-spacing:0.141px;left:1775.00px;">History</span>
<svg class="b" style="left:340px;top:60px" width="1580" height="130" viewBox="340 60 1580 130"><g transform="translate(351 74)"><path d="M11.6 3.4 A5.6 5.6 0 1 0 12.6 8.4" fill="none" stroke="#fff" stroke-width="2.2"/><path d="M8.2 5.8 H13.6 V0.4 Z" fill="#fff"/></g><g><rect x="746.20" y="71.75" width="18.80" height="16.50" rx="1.8" fill="#fff"/><g fill="#090c28"><rect x="749.02" y="75.88" width="5.50" height="3.79"/><rect x="756.68" y="75.88" width="5.50" height="3.79"/><rect x="749.02" y="81.82" width="5.50" height="3.79"/><rect x="756.68" y="81.82" width="5.50" height="3.79"/></g></g><path d="M908 79.6 H915.6 L911.8 83.8 Z" fill="#fff"/><path d="M1886.6 114.2 H1895.4 L1891 119 Z" fill="#fff"/><g transform="translate(796 154.6)"><rect x="0" y="0" width="9.4" height="12.2" rx="1.4" fill="#fff"/><rect x="1.5" y="1.5" width="6.4" height="2.6" fill="#0a0d27"/><g fill="#0a0d27"><rect x="1.5" y="5.4" width="1.5" height="1.4"/><rect x="3.95" y="5.4" width="1.5" height="1.4"/><rect x="6.4" y="5.4" width="1.5" height="1.4"/><rect x="1.5" y="7.6" width="1.5" height="1.4"/><rect x="3.95" y="7.6" width="1.5" height="1.4"/><rect x="6.4" y="7.6" width="1.5" height="3.4"/><rect x="1.5" y="9.7" width="3.9" height="1.4"/></g></g><g fill="none" stroke="#fff" stroke-width="2" stroke-linecap="round"><circle cx="1595" cy="159.2" r="4"/><path d="M1598.2 162.5 L1601.6 165.9"/></g><g transform="translate(1841 154.6)" fill="none" stroke="#9c9c9c" stroke-width="1.9" stroke-linecap="round" stroke-linejoin="round"><path d="M6 2.6 H2.6 C1.7 2.6 1 3.3 1 4.2 V12.4 C1 13.3 1.7 14 2.6 14 H10.8 C11.7 14 12.4 13.3 12.4 12.4 V9"/><path d="M6.4 8.6 L14 1 M9.4 0.9 H14.1 V5.6"/></g><g transform="translate(1872 154.4)" fill="#fff"><path d="M8.6 0 H14.6 V6 L12.6 4 L9.6 7 L7.6 5 L10.6 2 Z"/><path d="M6 14.6 H0 V8.6 L2 10.6 L5 7.6 L7 9.6 L4 12.6 Z"/></g><circle cx="782.00" cy="81.00" r="9.8" fill="#f4f4f4" stroke="#d8d8d8" stroke-width="0.8"/><path d="M779.40 78.40 L784.60 83.60 M784.60 78.40 L779.40 83.60" stroke="#c2283b" stroke-width="1.2" stroke-linecap="round"/><circle cx="997.50" cy="161.80" r="9.8" fill="#f4f4f4" stroke="#d8d8d8" stroke-width="0.8"/><path d="M994.90 159.20 L1000.10 164.40 M1000.10 159.20 L994.90 164.40" stroke="#c2283b" stroke-width="1.2" stroke-linecap="round"/><circle cx="1228.00" cy="161.80" r="9.8" fill="#f4f4f4" stroke="#d8d8d8" stroke-width="0.8"/><path d="M1225.40 159.20 L1230.60 164.40 M1230.60 159.20 L1225.40 164.40" stroke="#c2283b" stroke-width="1.2" stroke-linecap="round"/></svg>
<svg class="b" style="left:0;top:0" width="1920" height="1080" viewBox="0 0 1920 1080"><path d="M365 809.5 H1830.5" stroke="#2b3155" stroke-width="1"/><path d="M365 752.5 H1830.5" stroke="#2b3155" stroke-width="1"/><path d="M365 695.5 H1830.5" stroke="#2b3155" stroke-width="1"/><path d="M365 638.5 H1830.5" stroke="#2b3155" stroke-width="1"/><path d="M365 581.5 H1830.5" stroke="#2b3155" stroke-width="1"/><path d="M365 524.5 H1830.5" stroke="#2b3155" stroke-width="1"/><path d="M365 467.5 H1830.5" stroke="#2b3155" stroke-width="1"/><path d="M365 410.5 H1830.5" stroke="#2b3155" stroke-width="1"/><path d="M365 353.5 H1830.5" stroke="#2b3155" stroke-width="1"/><path d="M365 295.5 H1830.5" stroke="#2b3155" stroke-width="1"/><text x="1836.5" y="863.8" font-size="11.5" fill="#8d97d8" letter-spacing="0.6">0</text><text x="1836.5" y="806.8" font-size="11.5" fill="#8d97d8" letter-spacing="0.6">10</text><text x="1836.5" y="749.8" font-size="11.5" fill="#8d97d8" letter-spacing="0.6">20</text><text x="1836.5" y="692.8" font-size="11.5" fill="#8d97d8" letter-spacing="0.6">30</text><text x="1836.5" y="635.8" font-size="11.5" fill="#8d97d8" letter-spacing="0.6">40</text><text x="1836.5" y="578.8" font-size="11.5" fill="#8d97d8" letter-spacing="0.6">50</text><text x="1836.5" y="521.8" font-size="11.5" fill="#8d97d8" letter-spacing="0.6">60</text><text x="1836.5" y="464.8" font-size="11.5" fill="#8d97d8" letter-spacing="0.6">70</text><text x="1836.5" y="407.8" font-size="11.5" fill="#8d97d8" letter-spacing="0.6">80</text><text x="1836.5" y="350.8" font-size="11.5" fill="#8d97d8" letter-spacing="0.6">90</text><text transform="translate(1866.5 581) rotate(90)" font-size="12" fill="#8d97d8" text-anchor="middle">Heap (%)</text><path d="M365.0 509.5 C366.2 509.6 369.4 509.7 372.0 510.0 C374.6 510.3 375.2 511.2 380.0 511.5 C384.8 511.8 394.6 512.1 400.0 512.0 C405.4 511.9 407.8 511.2 412.0 511.0 C416.2 510.8 421.6 511.3 425.0 511.0 C428.4 510.7 428.6 509.6 432.0 509.5 C435.4 509.4 440.2 510.2 445.0 510.3 C449.8 510.4 456.1 510.2 460.0 510.0 C463.9 509.8 464.6 509.2 468.0 509.2 C471.4 509.2 474.1 509.9 480.0 510.0 C485.9 510.1 496.2 509.5 503.0 509.5 C509.8 509.5 513.7 510.0 520.0 510.2 C526.3 510.4 535.8 510.6 540.0 510.5 C544.2 510.4 540.0 509.5 545.0 509.5 C550.1 509.5 561.5 510.2 570.0 510.3 C578.5 510.4 589.9 509.7 595.0 510.0 C600.0 510.3 598.1 512.1 600.0 512.0 C601.9 511.9 600.0 509.8 606.0 509.5 C612.8 509.2 631.7 510.2 640.0 510.2 C648.3 510.2 648.2 509.5 655.0 509.5 C661.8 509.5 672.4 510.1 680.0 510.2 C687.6 510.3 694.6 509.7 700.0 510.0 C705.4 510.3 709.3 511.0 712.0 512.0 C714.7 513.0 714.6 513.7 716.0 516.0 C717.4 518.3 718.6 524.6 720.0 525.5 C721.4 526.4 722.5 522.4 724.0 521.0 C725.5 519.6 727.2 517.7 728.8 517.5 C730.3 517.3 731.5 519.1 733.0 520.0 C734.5 520.9 736.0 524.0 737.5 523.0 C739.0 522.0 740.6 516.1 742.0 514.0 C743.4 511.9 742.0 511.2 746.0 510.5 C750.8 509.8 765.1 510.2 770.0 510.0 C774.9 509.8 773.3 509.2 775.0 509.4 C776.7 509.6 775.8 510.9 780.0 511.0 C784.2 511.1 795.4 510.3 800.0 510.0 C804.6 509.7 804.5 509.1 807.0 509.2 C809.5 509.3 809.4 510.4 815.0 510.5 C820.6 510.6 830.6 510.0 840.0 510.0 C849.4 510.0 859.0 510.3 870.0 510.3 C881.0 510.3 898.0 509.4 905.0 510.0 C911.0 510.6 908.9 513.9 911.0 513.8 C913.1 513.6 912.6 509.6 917.5 509.0 C922.4 508.4 934.1 509.4 940.0 510.0 C945.9 510.6 948.3 512.5 952.0 512.5 C955.7 512.5 955.5 510.3 962.0 510.0 C968.5 509.7 984.6 509.8 990.0 510.5 C994.0 511.2 992.7 512.8 994.0 514.0 C995.3 515.2 996.0 517.3 997.5 517.5 C999.0 517.7 1000.9 515.9 1003.0 515.0 C1005.1 514.1 1006.3 513.9 1010.0 512.5 C1013.7 511.1 1021.3 508.4 1025.0 507.0 C1028.7 505.6 1029.1 506.4 1032.0 504.5 C1034.9 502.6 1038.9 498.3 1042.0 496.0 C1045.1 493.7 1047.8 492.2 1050.0 491.0 C1052.2 489.8 1053.3 489.3 1055.0 489.0 C1056.7 488.7 1058.5 488.8 1060.0 489.0 C1061.5 489.2 1062.8 489.3 1064.0 490.0 C1065.2 490.7 1066.2 491.8 1067.0 493.0 C1067.8 494.2 1068.2 494.6 1069.0 497.0 C1069.8 499.4 1071.0 503.8 1072.0 507.0 C1073.0 510.2 1074.0 515.0 1075.0 516.0 C1076.0 517.0 1076.8 514.2 1078.0 513.0 C1079.2 511.8 1080.0 509.9 1082.0 509.0 C1084.0 508.1 1086.6 508.3 1090.0 508.0 C1093.4 507.7 1097.4 507.9 1102.0 507.0 C1106.6 506.1 1111.4 504.0 1117.0 503.0 C1122.6 502.0 1129.0 501.9 1135.0 501.0 C1141.0 500.1 1146.6 498.9 1152.0 498.0 C1157.4 497.1 1162.8 497.2 1167.0 496.0 C1171.2 494.8 1173.6 492.5 1177.0 491.0 C1180.4 489.5 1184.6 487.5 1187.0 487.0 C1189.4 486.5 1189.5 487.5 1191.0 488.0 C1192.5 488.5 1194.3 490.1 1196.0 490.0 C1197.7 489.9 1199.3 488.2 1201.0 487.5 C1202.7 486.8 1204.3 486.1 1206.0 486.0 C1207.7 485.9 1209.5 486.5 1211.0 487.0 C1212.5 487.5 1213.8 487.8 1215.0 489.0 C1216.2 490.2 1216.8 492.0 1218.0 494.0 C1219.2 496.0 1220.6 500.0 1222.0 501.0 C1223.4 502.0 1224.5 500.3 1226.0 500.0 C1227.5 499.7 1229.5 498.7 1231.0 499.0 C1232.5 499.3 1233.5 500.6 1235.0 502.0 C1236.5 503.4 1237.5 506.1 1240.0 507.0 C1242.5 507.9 1247.5 508.5 1250.0 507.5 C1252.5 506.5 1253.3 503.3 1255.0 501.0 C1256.7 498.7 1258.5 496.0 1260.0 494.0 C1261.5 492.0 1262.7 490.2 1264.0 489.0 C1265.3 487.8 1266.3 487.2 1267.5 487.0 C1268.7 486.8 1269.7 487.3 1271.0 488.0 C1272.3 488.7 1273.6 489.0 1275.0 491.0 C1276.4 493.0 1277.6 496.6 1279.0 500.0 C1280.4 503.4 1279.1 509.4 1283.0 511.0 C1286.9 512.6 1295.7 510.1 1302.0 509.5 C1308.3 508.9 1314.4 508.1 1320.0 507.5 C1325.6 506.9 1330.8 506.6 1335.0 506.0 C1339.2 505.4 1342.0 504.3 1345.0 504.0 C1348.0 503.7 1348.7 504.9 1352.5 504.0 C1356.3 503.1 1362.8 499.9 1367.5 499.0 C1372.2 498.1 1376.6 499.7 1380.0 499.0 C1383.4 498.3 1385.6 496.4 1387.5 495.0 C1389.4 493.6 1389.7 492.0 1391.0 491.0 C1392.3 490.0 1393.6 489.2 1395.0 489.0 C1396.4 488.8 1397.7 489.4 1399.0 490.0 C1400.3 490.6 1401.0 491.0 1402.5 492.5 C1404.0 494.0 1406.0 496.7 1408.0 499.0 C1410.0 501.3 1411.5 505.4 1414.0 506.0 C1416.5 506.6 1419.6 503.4 1422.5 502.5 C1425.4 501.6 1428.9 501.9 1431.0 501.0 C1433.1 500.1 1433.6 498.2 1435.0 497.0 C1436.4 495.8 1437.6 494.2 1439.0 494.0 C1440.4 493.8 1441.5 494.9 1443.0 496.0 C1444.5 497.1 1446.5 500.3 1448.0 500.5 C1449.5 500.7 1450.5 498.1 1452.0 497.0 C1453.5 495.9 1455.5 494.0 1457.0 494.0 C1458.5 494.0 1459.5 495.6 1461.0 497.0 C1462.5 498.4 1464.5 502.3 1466.0 502.0 C1467.5 501.7 1468.6 497.2 1470.0 495.0 C1471.4 492.8 1473.2 489.3 1474.5 489.0 C1475.8 488.7 1476.6 489.9 1477.5 493.0 C1478.4 496.1 1479.2 502.1 1480.0 507.0 C1480.8 511.9 1480.0 520.0 1482.5 522.0 C1485.0 524.0 1490.3 519.9 1495.0 519.0 C1499.7 518.1 1504.5 518.0 1510.0 517.0 C1515.5 516.0 1522.0 514.0 1527.5 513.0 C1533.0 512.0 1537.0 511.7 1542.5 511.0 C1548.0 510.3 1556.2 509.9 1560.0 509.0 C1563.8 508.1 1563.3 506.9 1565.0 506.0 C1566.7 505.1 1567.5 504.6 1570.0 504.0 C1572.5 503.4 1576.6 503.4 1580.0 502.5 C1583.4 501.6 1585.8 500.3 1590.0 499.0 C1594.2 497.7 1600.3 496.4 1605.0 495.0 C1609.7 493.6 1614.3 491.7 1617.5 491.0 C1620.7 490.3 1621.9 490.1 1624.0 491.0 C1626.1 491.9 1627.3 494.6 1630.0 496.0 C1632.7 497.4 1637.0 498.2 1640.0 499.0 C1643.0 499.8 1645.6 501.0 1647.5 500.5 C1649.4 500.0 1649.7 497.3 1651.0 496.0 C1652.3 494.7 1653.5 493.9 1655.0 493.0 C1656.5 492.1 1658.1 491.5 1660.0 491.0 C1661.9 490.5 1664.5 489.0 1666.0 490.0 C1667.5 491.0 1667.9 493.9 1669.0 497.0 C1670.1 500.1 1670.2 506.3 1672.5 508.0 C1674.8 509.7 1679.5 507.1 1682.5 507.0 C1685.5 506.9 1687.9 507.0 1690.0 507.5 C1692.1 508.0 1693.5 509.1 1695.0 510.0 C1696.5 510.9 1696.5 512.3 1699.0 512.5 C1701.5 512.7 1706.9 511.3 1710.0 511.0 C1713.1 510.7 1714.8 510.7 1717.5 511.0 C1720.2 511.3 1721.3 512.7 1726.0 513.0 C1730.7 513.3 1737.5 512.6 1745.0 512.5 C1752.5 512.4 1764.5 512.4 1770.0 512.5 C1775.5 512.6 1775.0 513.4 1777.5 513.0 C1780.0 512.6 1782.9 510.3 1785.0 510.0 C1787.1 509.7 1788.3 510.5 1790.0 511.0 C1791.7 511.5 1792.5 512.7 1795.0 513.0 C1797.5 513.3 1801.9 513.3 1805.0 513.0 C1808.1 512.7 1811.6 511.3 1813.0 511.0 L1813.0 866.0 L365.0 866.0 Z" fill="#bf352e"/><path d="M365.0 509.5 C366.2 509.6 369.4 509.7 372.0 510.0 C374.6 510.3 375.2 511.2 380.0 511.5 C384.8 511.8 394.6 512.1 400.0 512.0 C405.4 511.9 407.8 511.2 412.0 511.0 C416.2 510.8 421.6 511.3 425.0 511.0 C428.4 510.7 428.6 509.6 432.0 509.5 C435.4 509.4 440.2 510.2 445.0 510.3 C449.8 510.4 456.1 510.2 460.0 510.0 C463.9 509.8 464.6 509.2 468.0 509.2 C471.4 509.2 474.1 509.9 480.0 510.0 C485.9 510.1 496.2 509.5 503.0 509.5 C509.8 509.5 513.7 510.0 520.0 510.2 C526.3 510.4 535.8 510.6 540.0 510.5 C544.2 510.4 540.0 509.5 545.0 509.5 C550.1 509.5 561.5 510.2 570.0 510.3 C578.5 510.4 589.9 509.7 595.0 510.0 C600.0 510.3 598.1 512.1 600.0 512.0 C601.9 511.9 600.0 509.8 606.0 509.5 C612.8 509.2 631.7 510.2 640.0 510.2 C648.3 510.2 648.2 509.5 655.0 509.5 C661.8 509.5 672.4 510.1 680.0 510.2 C687.6 510.3 694.6 509.7 700.0 510.0 C705.4 510.3 709.3 511.0 712.0 512.0 C714.7 513.0 714.6 513.7 716.0 516.0 C717.4 518.3 718.6 524.6 720.0 525.5 C721.4 526.4 722.5 522.4 724.0 521.0 C725.5 519.6 727.2 517.7 728.8 517.5 C730.3 517.3 731.5 519.1 733.0 520.0 C734.5 520.9 736.0 524.0 737.5 523.0 C739.0 522.0 740.6 516.1 742.0 514.0 C743.4 511.9 742.0 511.2 746.0 510.5 C750.8 509.8 765.1 510.2 770.0 510.0 C774.9 509.8 773.3 509.2 775.0 509.4 C776.7 509.6 775.8 510.9 780.0 511.0 C784.2 511.1 795.4 510.3 800.0 510.0 C804.6 509.7 804.5 509.1 807.0 509.2 C809.5 509.3 809.4 510.4 815.0 510.5 C820.6 510.6 830.6 510.0 840.0 510.0 C849.4 510.0 859.0 510.3 870.0 510.3 C881.0 510.3 898.0 509.4 905.0 510.0 C911.0 510.6 908.9 513.9 911.0 513.8 C913.1 513.6 912.6 509.6 917.5 509.0 C922.4 508.4 934.1 509.4 940.0 510.0 C945.9 510.6 948.3 512.5 952.0 512.5 C955.7 512.5 955.5 510.3 962.0 510.0 C968.5 509.7 984.6 509.8 990.0 510.5 C994.0 511.2 992.7 512.8 994.0 514.0 C995.3 515.2 996.0 517.3 997.5 517.5 C999.0 517.7 1000.9 515.9 1003.0 515.0 C1005.1 514.1 1006.3 513.9 1010.0 512.5 C1013.7 511.1 1021.3 508.4 1025.0 507.0 C1028.7 505.6 1029.1 506.4 1032.0 504.5 C1034.9 502.6 1038.9 498.3 1042.0 496.0 C1045.1 493.7 1047.8 492.2 1050.0 491.0 C1052.2 489.8 1053.3 489.3 1055.0 489.0 C1056.7 488.7 1058.5 488.8 1060.0 489.0 C1061.5 489.2 1062.8 489.3 1064.0 490.0 C1065.2 490.7 1066.2 491.8 1067.0 493.0 C1067.8 494.2 1068.2 494.6 1069.0 497.0 C1069.8 499.4 1071.0 503.8 1072.0 507.0 C1073.0 510.2 1074.0 515.0 1075.0 516.0 C1076.0 517.0 1076.8 514.2 1078.0 513.0 C1079.2 511.8 1080.0 509.9 1082.0 509.0 C1084.0 508.1 1086.6 508.3 1090.0 508.0 C1093.4 507.7 1097.4 507.9 1102.0 507.0 C1106.6 506.1 1111.4 504.0 1117.0 503.0 C1122.6 502.0 1129.0 501.9 1135.0 501.0 C1141.0 500.1 1146.6 498.9 1152.0 498.0 C1157.4 497.1 1162.8 497.2 1167.0 496.0 C1171.2 494.8 1173.6 492.5 1177.0 491.0 C1180.4 489.5 1184.6 487.5 1187.0 487.0 C1189.4 486.5 1189.5 487.5 1191.0 488.0 C1192.5 488.5 1194.3 490.1 1196.0 490.0 C1197.7 489.9 1199.3 488.2 1201.0 487.5 C1202.7 486.8 1204.3 486.1 1206.0 486.0 C1207.7 485.9 1209.5 486.5 1211.0 487.0 C1212.5 487.5 1213.8 487.8 1215.0 489.0 C1216.2 490.2 1216.8 492.0 1218.0 494.0 C1219.2 496.0 1220.6 500.0 1222.0 501.0 C1223.4 502.0 1224.5 500.3 1226.0 500.0 C1227.5 499.7 1229.5 498.7 1231.0 499.0 C1232.5 499.3 1233.5 500.6 1235.0 502.0 C1236.5 503.4 1237.5 506.1 1240.0 507.0 C1242.5 507.9 1247.5 508.5 1250.0 507.5 C1252.5 506.5 1253.3 503.3 1255.0 501.0 C1256.7 498.7 1258.5 496.0 1260.0 494.0 C1261.5 492.0 1262.7 490.2 1264.0 489.0 C1265.3 487.8 1266.3 487.2 1267.5 487.0 C1268.7 486.8 1269.7 487.3 1271.0 488.0 C1272.3 488.7 1273.6 489.0 1275.0 491.0 C1276.4 493.0 1277.6 496.6 1279.0 500.0 C1280.4 503.4 1279.1 509.4 1283.0 511.0 C1286.9 512.6 1295.7 510.1 1302.0 509.5 C1308.3 508.9 1314.4 508.1 1320.0 507.5 C1325.6 506.9 1330.8 506.6 1335.0 506.0 C1339.2 505.4 1342.0 504.3 1345.0 504.0 C1348.0 503.7 1348.7 504.9 1352.5 504.0 C1356.3 503.1 1362.8 499.9 1367.5 499.0 C1372.2 498.1 1376.6 499.7 1380.0 499.0 C1383.4 498.3 1385.6 496.4 1387.5 495.0 C1389.4 493.6 1389.7 492.0 1391.0 491.0 C1392.3 490.0 1393.6 489.2 1395.0 489.0 C1396.4 488.8 1397.7 489.4 1399.0 490.0 C1400.3 490.6 1401.0 491.0 1402.5 492.5 C1404.0 494.0 1406.0 496.7 1408.0 499.0 C1410.0 501.3 1411.5 505.4 1414.0 506.0 C1416.5 506.6 1419.6 503.4 1422.5 502.5 C1425.4 501.6 1428.9 501.9 1431.0 501.0 C1433.1 500.1 1433.6 498.2 1435.0 497.0 C1436.4 495.8 1437.6 494.2 1439.0 494.0 C1440.4 493.8 1441.5 494.9 1443.0 496.0 C1444.5 497.1 1446.5 500.3 1448.0 500.5 C1449.5 500.7 1450.5 498.1 1452.0 497.0 C1453.5 495.9 1455.5 494.0 1457.0 494.0 C1458.5 494.0 1459.5 495.6 1461.0 497.0 C1462.5 498.4 1464.5 502.3 1466.0 502.0 C1467.5 501.7 1468.6 497.2 1470.0 495.0 C1471.4 492.8 1473.2 489.3 1474.5 489.0 C1475.8 488.7 1476.6 489.9 1477.5 493.0 C1478.4 496.1 1479.2 502.1 1480.0 507.0 C1480.8 511.9 1480.0 520.0 1482.5 522.0 C1485.0 524.0 1490.3 519.9 1495.0 519.0 C1499.7 518.1 1504.5 518.0 1510.0 517.0 C1515.5 516.0 1522.0 514.0 1527.5 513.0 C1533.0 512.0 1537.0 511.7 1542.5 511.0 C1548.0 510.3 1556.2 509.9 1560.0 509.0 C1563.8 508.1 1563.3 506.9 1565.0 506.0 C1566.7 505.1 1567.5 504.6 1570.0 504.0 C1572.5 503.4 1576.6 503.4 1580.0 502.5 C1583.4 501.6 1585.8 500.3 1590.0 499.0 C1594.2 497.7 1600.3 496.4 1605.0 495.0 C1609.7 493.6 1614.3 491.7 1617.5 491.0 C1620.7 490.3 1621.9 490.1 1624.0 491.0 C1626.1 491.9 1627.3 494.6 1630.0 496.0 C1632.7 497.4 1637.0 498.2 1640.0 499.0 C1643.0 499.8 1645.6 501.0 1647.5 500.5 C1649.4 500.0 1649.7 497.3 1651.0 496.0 C1652.3 494.7 1653.5 493.9 1655.0 493.0 C1656.5 492.1 1658.1 491.5 1660.0 491.0 C1661.9 490.5 1664.5 489.0 1666.0 490.0 C1667.5 491.0 1667.9 493.9 1669.0 497.0 C1670.1 500.1 1670.2 506.3 1672.5 508.0 C1674.8 509.7 1679.5 507.1 1682.5 507.0 C1685.5 506.9 1687.9 507.0 1690.0 507.5 C1692.1 508.0 1693.5 509.1 1695.0 510.0 C1696.5 510.9 1696.5 512.3 1699.0 512.5 C1701.5 512.7 1706.9 511.3 1710.0 511.0 C1713.1 510.7 1714.8 510.7 1717.5 511.0 C1720.2 511.3 1721.3 512.7 1726.0 513.0 C1730.7 513.3 1737.5 512.6 1745.0 512.5 C1752.5 512.4 1764.5 512.4 1770.0 512.5 C1775.5 512.6 1775.0 513.4 1777.5 513.0 C1780.0 512.6 1782.9 510.3 1785.0 510.0 C1787.1 509.7 1788.3 510.5 1790.0 511.0 C1791.7 511.5 1792.5 512.7 1795.0 513.0 C1797.5 513.3 1801.9 513.3 1805.0 513.0 C1808.1 512.7 1811.6 511.3 1813.0 511.0" fill="none" stroke="#ef4336" stroke-width="1.8" stroke-linejoin="round"/><path d="M365 524.5 H1813" stroke="#c84a40" stroke-width="1" opacity="0.55"/><path d="M365.0 566.0 C382.9 565.8 451.3 564.7 470.0 565.0 C475.0 565.3 470.0 567.1 475.0 567.5 C486.9 567.9 528.1 567.1 540.0 567.5 C545.0 567.9 540.0 569.7 545.0 570.0 C560.3 570.3 614.7 569.8 630.0 569.0 C635.0 568.2 633.3 565.7 635.0 565.5 C636.7 565.3 635.0 567.7 640.0 568.0 C651.0 568.3 679.6 567.3 700.0 567.0 C720.4 566.7 744.7 566.3 760.0 566.0 C775.3 565.7 783.2 565.2 790.0 565.5 C796.8 565.8 791.5 567.2 800.0 567.5 C808.5 567.8 823.0 567.3 840.0 567.0 C857.0 566.7 874.5 566.4 900.0 566.0 C925.5 565.6 973.5 564.0 990.0 564.5 C997.0 565.0 994.8 568.7 997.0 569.0 C999.2 569.3 1000.8 566.8 1003.0 566.0 C1005.2 565.2 1003.0 565.4 1010.0 564.5 C1019.7 563.6 1050.8 560.8 1060.0 560.5 C1064.0 560.2 1062.8 562.1 1064.0 563.0 C1065.2 563.9 1065.8 565.9 1067.0 566.0 C1068.2 566.1 1069.6 564.2 1071.0 563.5 C1072.4 562.8 1071.0 563.3 1075.0 562.0 C1091.0 560.7 1148.0 556.7 1165.0 556.0 C1175.0 555.3 1165.0 557.7 1175.0 558.0 C1189.5 558.3 1236.6 558.5 1250.0 557.5 C1254.0 556.5 1252.7 553.4 1254.0 552.0 C1255.3 550.6 1256.1 549.3 1257.5 549.0 C1258.9 548.7 1259.0 549.1 1262.0 550.0 C1265.0 550.9 1271.5 552.7 1275.0 554.0 C1278.5 555.3 1275.0 557.2 1282.5 557.5 C1290.2 557.8 1300.9 556.5 1320.0 556.0 C1339.1 555.5 1371.7 555.0 1395.0 554.5 C1418.3 554.0 1445.8 554.8 1457.0 553.0 C1461.0 551.2 1459.5 546.9 1461.0 544.0 C1462.5 541.1 1464.3 536.0 1466.0 536.0 C1467.7 536.0 1469.5 541.3 1471.0 544.0 C1472.5 546.7 1473.5 550.8 1475.0 552.0 C1476.5 553.2 1475.0 552.0 1480.0 551.0 C1496.2 550.0 1553.0 546.5 1570.0 546.0 C1580.0 545.5 1577.5 547.2 1580.0 548.0 C1582.5 548.8 1580.0 550.5 1585.0 550.5 C1600.3 550.5 1644.9 548.8 1670.0 548.0 C1695.1 547.2 1720.2 545.7 1732.5 546.0 C1742.5 546.3 1732.5 548.9 1742.5 549.5 C1756.2 550.1 1801.0 549.5 1813.0 549.5 L1813.0 866.0 L365.0 866.0 Z" fill="#c1472a"/><path d="M365.0 570.5 C382.9 570.3 451.3 569.2 470.0 569.5 C475.0 569.8 470.0 571.6 475.0 572.0 C486.9 572.4 528.1 571.6 540.0 572.0 C545.0 572.4 540.0 574.2 545.0 574.5 C560.3 574.8 614.7 574.3 630.0 573.5 C635.0 572.7 633.3 570.2 635.0 570.0 C636.7 569.8 635.0 572.2 640.0 572.5 C651.0 572.8 679.6 571.8 700.0 571.5 C720.4 571.2 744.7 570.8 760.0 570.5 C775.3 570.2 783.2 569.7 790.0 570.0 C796.8 570.3 791.5 571.7 800.0 572.0 C808.5 572.3 823.0 571.8 840.0 571.5 C857.0 571.2 874.5 570.9 900.0 570.5 C925.5 570.1 973.5 568.5 990.0 569.0 C997.0 569.5 994.8 573.2 997.0 573.5 C999.2 573.8 1000.8 571.3 1003.0 570.5 C1005.2 569.7 1003.0 569.9 1010.0 569.0 C1019.7 568.1 1050.8 565.3 1060.0 565.0 C1064.0 564.7 1062.8 566.6 1064.0 567.5 C1065.2 568.4 1065.8 570.4 1067.0 570.5 C1068.2 570.6 1069.6 568.7 1071.0 568.0 C1072.4 567.3 1071.0 567.8 1075.0 566.5 C1091.0 565.2 1148.0 561.2 1165.0 560.5 C1175.0 559.8 1165.0 562.2 1175.0 562.5 C1189.5 562.8 1236.6 563.0 1250.0 562.0 C1254.0 561.0 1252.7 557.9 1254.0 556.5 C1255.3 555.1 1256.1 553.8 1257.5 553.5 C1258.9 553.2 1259.0 553.6 1262.0 554.5 C1265.0 555.4 1271.5 557.2 1275.0 558.5 C1278.5 559.8 1275.0 561.7 1282.5 562.0 C1290.2 562.3 1300.9 561.0 1320.0 560.5 C1339.1 560.0 1371.7 559.5 1395.0 559.0 C1418.3 558.5 1445.8 559.3 1457.0 557.5 C1461.0 555.7 1459.5 551.4 1461.0 548.5 C1462.5 545.6 1464.3 540.5 1466.0 540.5 C1467.7 540.5 1469.5 545.8 1471.0 548.5 C1472.5 551.2 1473.5 555.3 1475.0 556.5 C1476.5 557.7 1475.0 556.5 1480.0 555.5 C1496.2 554.5 1553.0 551.0 1570.0 550.5 C1580.0 550.0 1577.5 551.7 1580.0 552.5 C1582.5 553.3 1580.0 555.0 1585.0 555.0 C1600.3 555.0 1644.9 553.3 1670.0 552.5 C1695.1 551.7 1720.2 550.2 1732.5 550.5 C1742.5 550.8 1732.5 553.4 1742.5 554.0 C1756.2 554.6 1801.0 554.0 1813.0 554.0 L1813.0 866.0 L365.0 866.0 Z" fill="#c34d2a"/><path d="M1397 555 L1401 546 L1404 541.5 L1406.5 541.5 L1410 547 L1415 553.5 L1410 555.5 Z" fill="#da6a45"/><path d="M365.0 611.0 C366.2 610.8 369.4 610.1 372.0 610.0 C374.6 609.9 376.9 610.8 380.0 610.5 C383.1 610.2 380.0 609.4 390.0 608.0 C407.9 606.6 458.6 603.7 485.0 602.0 C511.4 600.3 519.5 599.5 545.0 598.0 C570.5 596.5 618.4 594.2 635.0 593.0 C642.5 591.8 639.8 591.0 642.5 591.0 C645.2 591.0 648.2 593.3 651.0 593.0 C653.8 592.7 656.2 589.7 659.0 589.5 C661.8 589.3 663.5 592.0 667.5 592.0 C671.5 592.0 667.5 590.9 682.5 589.5 C698.2 588.1 738.3 585.2 760.0 583.8 C781.7 582.3 798.1 582.3 810.0 581.0 C821.9 579.7 824.9 577.1 830.0 576.0 C835.1 574.9 830.0 575.5 840.0 574.5 C851.0 573.5 870.4 571.6 895.0 570.0 C919.6 568.4 968.9 565.8 985.0 565.0 C990.0 564.2 988.9 563.0 990.0 565.5 C991.1 568.0 991.0 569.9 991.5 580.0 C992.0 590.1 992.4 611.4 993.0 625.0 C993.6 638.6 994.3 652.4 995.0 660.0 C995.7 667.6 996.1 667.5 997.0 670.0 C997.9 672.5 998.6 673.4 1000.0 674.5 C1001.4 675.6 1003.3 676.2 1005.0 676.5 C1006.7 676.8 1005.0 676.7 1010.0 676.0 C1016.0 675.3 1033.7 673.7 1040.0 672.5 C1046.3 671.3 1042.4 669.6 1047.0 669.0 C1051.6 668.4 1062.9 668.3 1067.0 669.0 C1071.0 669.7 1069.6 671.6 1071.0 673.0 C1072.4 674.4 1073.8 677.0 1075.0 677.5 C1076.2 678.0 1076.8 676.6 1078.0 676.0 C1079.2 675.4 1078.0 674.9 1082.0 674.0 C1088.3 673.1 1101.7 672.0 1115.0 671.0 C1128.3 670.0 1143.0 669.1 1160.0 668.0 C1177.0 666.9 1199.9 665.7 1215.0 664.5 C1230.1 663.3 1242.7 660.7 1249.0 661.0 C1252.0 661.3 1250.6 663.3 1252.0 666.0 C1253.4 668.7 1255.6 675.3 1257.0 677.0 C1258.4 678.7 1258.6 676.5 1260.0 676.0 C1261.4 675.5 1260.0 675.0 1265.0 674.0 C1275.2 673.0 1297.9 671.4 1320.0 670.0 C1342.1 668.6 1381.6 665.8 1395.0 666.0 C1399.0 666.2 1397.3 669.3 1399.0 671.0 C1400.7 672.7 1401.4 675.8 1405.0 676.0 C1408.6 676.2 1411.1 674.0 1420.0 672.0 C1428.9 670.0 1450.5 664.8 1457.5 664.5 C1461.0 664.2 1459.6 667.9 1461.0 670.0 C1462.4 672.1 1464.1 676.3 1466.0 677.0 C1467.9 677.7 1469.6 674.9 1472.0 674.0 C1474.4 673.1 1472.0 673.1 1480.0 672.0 C1492.4 670.9 1525.5 668.9 1545.0 667.5 C1564.5 666.1 1578.0 665.4 1595.0 664.0 C1612.0 662.6 1634.0 661.4 1645.0 659.5 C1656.0 657.6 1654.9 655.3 1660.0 653.0 C1665.1 650.7 1669.9 647.5 1675.0 646.0 C1680.1 644.5 1682.3 644.9 1690.0 644.0 C1697.7 643.1 1710.7 642.4 1720.0 641.0 C1729.3 639.6 1736.5 637.2 1745.0 636.0 C1753.5 634.8 1760.7 634.9 1770.0 634.0 C1779.3 633.1 1792.7 631.6 1800.0 631.0 C1807.3 630.4 1810.8 630.6 1813.0 630.5 L1813.0 866.0 L365.0 866.0 Z" fill="#b34523"/><path d="M365.0 611.0 C366.2 610.8 369.4 610.1 372.0 610.0 C374.6 609.9 376.9 610.8 380.0 610.5 C383.1 610.2 380.0 609.4 390.0 608.0 C407.9 606.6 458.6 603.7 485.0 602.0 C511.4 600.3 519.5 599.5 545.0 598.0 C570.5 596.5 618.4 594.2 635.0 593.0 C642.5 591.8 639.8 591.0 642.5 591.0 C645.2 591.0 648.2 593.3 651.0 593.0 C653.8 592.7 656.2 589.7 659.0 589.5 C661.8 589.3 663.5 592.0 667.5 592.0 C671.5 592.0 667.5 590.9 682.5 589.5 C698.2 588.1 738.3 585.2 760.0 583.8 C781.7 582.3 798.1 582.3 810.0 581.0 C821.9 579.7 824.9 577.1 830.0 576.0 C835.1 574.9 830.0 575.5 840.0 574.5 C851.0 573.5 870.4 571.6 895.0 570.0 C919.6 568.4 968.9 565.8 985.0 565.0 C990.0 564.2 988.9 563.0 990.0 565.5 C991.1 568.0 991.0 569.9 991.5 580.0 C992.0 590.1 992.4 611.4 993.0 625.0 C993.6 638.6 994.3 652.4 995.0 660.0 C995.7 667.6 996.1 667.5 997.0 670.0 C997.9 672.5 998.6 673.4 1000.0 674.5 C1001.4 675.6 1003.3 676.2 1005.0 676.5 C1006.7 676.8 1005.0 676.7 1010.0 676.0 C1016.0 675.3 1033.7 673.7 1040.0 672.5 C1046.3 671.3 1042.4 669.6 1047.0 669.0 C1051.6 668.4 1062.9 668.3 1067.0 669.0 C1071.0 669.7 1069.6 671.6 1071.0 673.0 C1072.4 674.4 1073.8 677.0 1075.0 677.5 C1076.2 678.0 1076.8 676.6 1078.0 676.0 C1079.2 675.4 1078.0 674.9 1082.0 674.0 C1088.3 673.1 1101.7 672.0 1115.0 671.0 C1128.3 670.0 1143.0 669.1 1160.0 668.0 C1177.0 666.9 1199.9 665.7 1215.0 664.5 C1230.1 663.3 1242.7 660.7 1249.0 661.0 C1252.0 661.3 1250.6 663.3 1252.0 666.0 C1253.4 668.7 1255.6 675.3 1257.0 677.0 C1258.4 678.7 1258.6 676.5 1260.0 676.0 C1261.4 675.5 1260.0 675.0 1265.0 674.0 C1275.2 673.0 1297.9 671.4 1320.0 670.0 C1342.1 668.6 1381.6 665.8 1395.0 666.0 C1399.0 666.2 1397.3 669.3 1399.0 671.0 C1400.7 672.7 1401.4 675.8 1405.0 676.0 C1408.6 676.2 1411.1 674.0 1420.0 672.0 C1428.9 670.0 1450.5 664.8 1457.5 664.5 C1461.0 664.2 1459.6 667.9 1461.0 670.0 C1462.4 672.1 1464.1 676.3 1466.0 677.0 C1467.9 677.7 1469.6 674.9 1472.0 674.0 C1474.4 673.1 1472.0 673.1 1480.0 672.0 C1492.4 670.9 1525.5 668.9 1545.0 667.5 C1564.5 666.1 1578.0 665.4 1595.0 664.0 C1612.0 662.6 1634.0 661.4 1645.0 659.5 C1656.0 657.6 1654.9 655.3 1660.0 653.0 C1665.1 650.7 1669.9 647.5 1675.0 646.0 C1680.1 644.5 1682.3 644.9 1690.0 644.0 C1697.7 643.1 1710.7 642.4 1720.0 641.0 C1729.3 639.6 1736.5 637.2 1745.0 636.0 C1753.5 634.8 1760.7 634.9 1770.0 634.0 C1779.3 633.1 1792.7 631.6 1800.0 631.0 C1807.3 630.4 1810.8 630.6 1813.0 630.5" fill="none" stroke="#ac4221" stroke-width="1.0" stroke-linejoin="round"/><path d="M365.0 705.0 C366.3 705.0 370.1 705.4 372.6 705.4 C375.1 705.5 377.2 705.4 379.9 705.3 C382.6 705.1 385.4 704.7 388.4 704.6 C391.3 704.5 394.4 704.5 397.4 704.6 C400.4 704.6 403.4 704.5 406.1 704.6 C408.9 704.7 410.5 705.1 413.5 705.1 C416.5 705.1 420.7 704.6 423.8 704.7 C426.9 704.7 428.5 705.3 431.7 705.4 C434.9 705.5 439.2 705.2 442.5 705.3 C445.8 705.4 448.4 705.8 451.1 705.9 C453.7 705.9 455.6 705.9 458.2 705.7 C460.9 705.5 463.7 704.8 466.4 704.7 C469.1 704.6 470.9 704.9 473.9 704.9 C476.9 704.9 480.8 704.7 484.1 704.8 C487.5 704.8 490.4 705.3 493.5 705.4 C496.5 705.5 499.3 705.4 502.0 705.3 C504.6 705.1 506.6 704.6 509.2 704.6 C511.8 704.6 514.2 705.4 517.0 705.5 C519.8 705.5 522.7 705.0 525.7 704.9 C528.8 704.9 532.1 705.0 535.1 705.1 C538.1 705.2 540.2 705.7 543.3 705.6 C546.3 705.6 549.8 704.9 553.1 704.8 C556.3 704.8 559.0 705.1 562.4 705.2 C565.7 705.4 569.7 705.4 572.9 705.5 C576.0 705.6 578.4 705.9 581.0 705.9 C583.7 705.8 585.5 705.3 588.5 705.1 C591.5 704.9 595.3 704.8 598.5 704.7 C601.8 704.6 604.3 704.4 607.5 704.6 C610.7 704.7 613.9 705.4 617.2 705.6 C620.4 705.8 623.5 705.7 626.5 705.7 C629.4 705.7 631.7 705.5 634.7 705.5 C637.7 705.4 641.0 705.3 644.1 705.3 C647.2 705.3 649.6 705.7 652.9 705.7 C656.2 705.7 660.2 705.3 663.7 705.2 C667.2 705.0 670.0 704.5 673.3 704.6 C676.7 704.6 679.6 705.2 683.2 705.4 C686.7 705.6 690.9 705.7 694.1 705.7 C697.4 705.6 699.2 705.2 702.3 705.0 C705.3 704.8 708.8 704.6 711.9 704.5 C715.1 704.5 718.0 704.7 720.8 704.7 C723.6 704.7 725.3 704.6 728.3 704.6 C731.2 704.6 735.3 704.6 738.3 704.7 C741.4 704.8 743.2 705.1 746.3 705.0 C749.5 705.0 753.5 704.6 756.8 704.6 C760.1 704.7 762.3 705.1 765.6 705.3 C768.9 705.4 772.6 705.7 776.1 705.6 C779.7 705.6 783.3 705.0 786.6 704.9 C789.8 704.8 792.0 704.8 795.2 705.0 C798.5 705.2 802.7 705.9 805.8 705.8 C808.9 705.8 810.7 704.9 813.4 704.7 C816.0 704.6 818.4 704.7 821.3 704.8 C824.2 704.9 827.4 705.4 830.3 705.3 C833.1 705.3 835.5 704.6 838.3 704.5 C841.2 704.5 843.9 704.8 847.0 705.0 C850.0 705.2 853.0 705.8 856.2 705.8 C859.5 705.9 862.7 705.3 866.0 705.2 C869.3 705.2 872.6 705.4 875.5 705.4 C878.3 705.5 879.7 705.7 882.7 705.8 C885.6 705.8 889.4 705.8 892.8 705.7 C896.3 705.6 899.8 705.2 903.0 705.0 C906.2 704.9 908.5 704.7 911.6 704.6 C914.7 704.6 918.3 704.6 921.1 704.6 C924.0 704.6 925.9 704.7 928.4 704.8 C930.9 704.9 933.5 705.0 936.1 705.0 C938.6 704.9 940.8 704.6 943.3 704.5 C945.8 704.4 948.1 704.6 950.9 704.6 C953.6 704.6 956.1 704.4 959.3 704.5 C962.6 704.7 966.8 705.3 969.8 705.4 C972.9 705.4 974.7 704.9 977.4 704.9 C980.1 704.8 983.1 704.9 985.8 705.0 C988.5 705.2 990.2 705.7 993.3 705.7 C996.4 705.7 1000.9 705.3 1004.3 705.2 C1007.7 705.0 1010.4 704.6 1013.2 704.6 C1016.0 704.6 1018.0 704.8 1020.6 705.0 C1023.2 705.2 1026.0 705.7 1028.7 705.7 C1031.3 705.6 1033.2 704.6 1036.3 704.5 C1039.5 704.5 1044.0 705.1 1047.1 705.2 C1050.3 705.4 1052.2 705.3 1054.7 705.3 C1057.2 705.3 1058.8 705.2 1061.8 705.2 C1064.9 705.3 1069.2 705.8 1072.7 705.7 C1076.3 705.6 1079.4 705.0 1082.5 704.9 C1085.6 704.7 1087.8 704.7 1091.0 704.7 C1094.1 704.8 1097.6 705.2 1101.1 705.2 C1104.5 705.3 1108.1 704.9 1111.2 705.0 C1114.3 705.0 1115.9 705.5 1119.1 705.6 C1122.3 705.8 1126.4 705.7 1130.0 705.7 C1133.6 705.7 1136.8 705.8 1140.2 705.6 C1143.7 705.5 1147.0 704.9 1150.2 704.8 C1153.4 704.7 1156.5 705.0 1159.3 705.0 C1162.0 705.0 1163.8 704.6 1166.4 704.5 C1169.0 704.5 1171.5 704.6 1174.5 704.9 C1177.6 705.1 1181.1 705.7 1184.3 705.8 C1187.4 706.0 1189.7 705.8 1193.1 705.8 C1196.4 705.8 1200.7 706.0 1204.0 705.8 C1207.3 705.7 1209.7 705.0 1212.5 704.8 C1215.3 704.6 1217.7 704.7 1220.4 704.8 C1223.1 704.9 1225.1 705.2 1228.2 705.4 C1231.3 705.5 1235.5 705.7 1238.8 705.7 C1242.1 705.7 1244.5 705.6 1247.7 705.4 C1251.0 705.2 1254.5 704.6 1257.9 704.6 C1261.3 704.7 1264.2 705.6 1267.6 705.8 C1270.9 705.9 1274.5 705.7 1277.7 705.6 C1280.9 705.4 1284.5 704.8 1286.6 704.7 C1288.7 704.7 1287.7 705.4 1290.0 705.2 C1292.3 705.0 1296.6 703.7 1300.0 703.6 C1303.4 703.5 1307.0 704.4 1310.2 704.4 C1313.4 704.4 1315.5 703.7 1318.8 703.7 C1322.1 703.6 1326.4 704.1 1329.6 704.1 C1332.7 704.0 1334.7 703.3 1337.3 703.4 C1339.9 703.4 1341.8 704.3 1344.9 704.3 C1347.9 704.3 1351.6 703.4 1355.1 703.4 C1358.6 703.4 1362.0 704.3 1365.4 704.4 C1368.8 704.4 1371.8 703.8 1375.0 703.6 C1378.2 703.4 1381.5 703.2 1384.2 703.4 C1387.0 703.5 1388.4 704.3 1391.3 704.4 C1394.1 704.4 1397.4 703.9 1400.9 703.8 C1404.3 703.7 1408.0 703.7 1411.6 703.7 C1415.2 703.8 1419.0 704.2 1422.1 704.2 C1425.2 704.2 1427.2 703.6 1429.9 703.5 C1432.7 703.4 1435.1 703.5 1438.1 703.5 C1441.1 703.5 1444.4 703.5 1447.5 703.5 C1450.5 703.5 1452.8 703.3 1456.1 703.4 C1459.4 703.4 1463.5 703.5 1466.8 703.6 C1470.1 703.7 1472.3 703.9 1475.6 703.9 C1478.9 703.9 1482.6 703.7 1486.2 703.7 C1489.8 703.7 1493.5 703.8 1496.9 703.8 C1500.3 703.8 1503.3 703.8 1506.0 703.8 C1508.8 703.8 1510.6 703.8 1513.1 703.7 C1515.6 703.6 1517.8 703.3 1520.8 703.2 C1523.9 703.2 1527.8 703.3 1531.0 703.4 C1534.3 703.6 1536.8 704.0 1539.9 704.1 C1543.0 704.1 1546.0 703.6 1549.1 703.6 C1552.3 703.6 1554.9 703.9 1558.2 703.9 C1561.5 703.8 1565.1 703.4 1568.4 703.3 C1571.6 703.3 1574.6 703.4 1577.6 703.5 C1580.5 703.6 1582.8 704.1 1585.7 704.1 C1588.6 704.2 1591.5 703.8 1594.7 703.9 C1598.0 703.9 1601.6 704.3 1604.8 704.3 C1608.0 704.3 1610.5 704.0 1613.5 703.9 C1616.6 703.9 1619.4 703.8 1622.6 703.8 C1625.8 703.8 1629.1 703.7 1632.3 703.7 C1635.6 703.7 1638.1 703.7 1641.5 703.8 C1644.9 703.8 1648.6 703.9 1652.2 704.0 C1655.9 704.1 1659.6 704.4 1662.7 704.3 C1665.9 704.3 1667.6 703.9 1670.8 703.9 C1674.0 703.9 1678.4 704.3 1681.6 704.2 C1684.7 704.1 1686.3 703.5 1689.1 703.3 C1691.9 703.2 1695.0 703.3 1697.9 703.3 C1700.7 703.3 1702.8 703.1 1705.8 703.3 C1708.8 703.4 1712.1 704.1 1715.5 704.1 C1719.0 704.2 1722.6 703.4 1726.1 703.4 C1729.6 703.4 1733.0 703.8 1736.0 704.0 C1738.9 704.1 1740.4 704.3 1743.5 704.3 C1746.7 704.2 1750.7 703.6 1754.4 703.5 C1758.1 703.4 1761.9 703.5 1765.2 703.7 C1768.6 703.8 1770.9 704.4 1774.2 704.4 C1777.4 704.3 1781.3 703.5 1784.5 703.4 C1787.7 703.3 1790.3 703.8 1793.2 703.8 C1796.1 703.8 1798.8 703.4 1801.6 703.4 C1804.4 703.5 1807.9 704.0 1809.9 704.1 C1811.8 704.1 1812.5 703.8 1813.0 703.8 L1813.0 866.0 L365.0 866.0 Z" fill="#ecc54e"/><path d="M365.0 705.0 C366.3 705.0 370.1 705.4 372.6 705.4 C375.1 705.5 377.2 705.4 379.9 705.3 C382.6 705.1 385.4 704.7 388.4 704.6 C391.3 704.5 394.4 704.5 397.4 704.6 C400.4 704.6 403.4 704.5 406.1 704.6 C408.9 704.7 410.5 705.1 413.5 705.1 C416.5 705.1 420.7 704.6 423.8 704.7 C426.9 704.7 428.5 705.3 431.7 705.4 C434.9 705.5 439.2 705.2 442.5 705.3 C445.8 705.4 448.4 705.8 451.1 705.9 C453.7 705.9 455.6 705.9 458.2 705.7 C460.9 705.5 463.7 704.8 466.4 704.7 C469.1 704.6 470.9 704.9 473.9 704.9 C476.9 704.9 480.8 704.7 484.1 704.8 C487.5 704.8 490.4 705.3 493.5 705.4 C496.5 705.5 499.3 705.4 502.0 705.3 C504.6 705.1 506.6 704.6 509.2 704.6 C511.8 704.6 514.2 705.4 517.0 705.5 C519.8 705.5 522.7 705.0 525.7 704.9 C528.8 704.9 532.1 705.0 535.1 705.1 C538.1 705.2 540.2 705.7 543.3 705.6 C546.3 705.6 549.8 704.9 553.1 704.8 C556.3 704.8 559.0 705.1 562.4 705.2 C565.7 705.4 569.7 705.4 572.9 705.5 C576.0 705.6 578.4 705.9 581.0 705.9 C583.7 705.8 585.5 705.3 588.5 705.1 C591.5 704.9 595.3 704.8 598.5 704.7 C601.8 704.6 604.3 704.4 607.5 704.6 C610.7 704.7 613.9 705.4 617.2 705.6 C620.4 705.8 623.5 705.7 626.5 705.7 C629.4 705.7 631.7 705.5 634.7 705.5 C637.7 705.4 641.0 705.3 644.1 705.3 C647.2 705.3 649.6 705.7 652.9 705.7 C656.2 705.7 660.2 705.3 663.7 705.2 C667.2 705.0 670.0 704.5 673.3 704.6 C676.7 704.6 679.6 705.2 683.2 705.4 C686.7 705.6 690.9 705.7 694.1 705.7 C697.4 705.6 699.2 705.2 702.3 705.0 C705.3 704.8 708.8 704.6 711.9 704.5 C715.1 704.5 718.0 704.7 720.8 704.7 C723.6 704.7 725.3 704.6 728.3 704.6 C731.2 704.6 735.3 704.6 738.3 704.7 C741.4 704.8 743.2 705.1 746.3 705.0 C749.5 705.0 753.5 704.6 756.8 704.6 C760.1 704.7 762.3 705.1 765.6 705.3 C768.9 705.4 772.6 705.7 776.1 705.6 C779.7 705.6 783.3 705.0 786.6 704.9 C789.8 704.8 792.0 704.8 795.2 705.0 C798.5 705.2 802.7 705.9 805.8 705.8 C808.9 705.8 810.7 704.9 813.4 704.7 C816.0 704.6 818.4 704.7 821.3 704.8 C824.2 704.9 827.4 705.4 830.3 705.3 C833.1 705.3 835.5 704.6 838.3 704.5 C841.2 704.5 843.9 704.8 847.0 705.0 C850.0 705.2 853.0 705.8 856.2 705.8 C859.5 705.9 862.7 705.3 866.0 705.2 C869.3 705.2 872.6 705.4 875.5 705.4 C878.3 705.5 879.7 705.7 882.7 705.8 C885.6 705.8 889.4 705.8 892.8 705.7 C896.3 705.6 899.8 705.2 903.0 705.0 C906.2 704.9 908.5 704.7 911.6 704.6 C914.7 704.6 918.3 704.6 921.1 704.6 C924.0 704.6 925.9 704.7 928.4 704.8 C930.9 704.9 933.5 705.0 936.1 705.0 C938.6 704.9 940.8 704.6 943.3 704.5 C945.8 704.4 948.1 704.6 950.9 704.6 C953.6 704.6 956.1 704.4 959.3 704.5 C962.6 704.7 966.8 705.3 969.8 705.4 C972.9 705.4 974.7 704.9 977.4 704.9 C980.1 704.8 983.1 704.9 985.8 705.0 C988.5 705.2 990.2 705.7 993.3 705.7 C996.4 705.7 1000.9 705.3 1004.3 705.2 C1007.7 705.0 1010.4 704.6 1013.2 704.6 C1016.0 704.6 1018.0 704.8 1020.6 705.0 C1023.2 705.2 1026.0 705.7 1028.7 705.7 C1031.3 705.6 1033.2 704.6 1036.3 704.5 C1039.5 704.5 1044.0 705.1 1047.1 705.2 C1050.3 705.4 1052.2 705.3 1054.7 705.3 C1057.2 705.3 1058.8 705.2 1061.8 705.2 C1064.9 705.3 1069.2 705.8 1072.7 705.7 C1076.3 705.6 1079.4 705.0 1082.5 704.9 C1085.6 704.7 1087.8 704.7 1091.0 704.7 C1094.1 704.8 1097.6 705.2 1101.1 705.2 C1104.5 705.3 1108.1 704.9 1111.2 705.0 C1114.3 705.0 1115.9 705.5 1119.1 705.6 C1122.3 705.8 1126.4 705.7 1130.0 705.7 C1133.6 705.7 1136.8 705.8 1140.2 705.6 C1143.7 705.5 1147.0 704.9 1150.2 704.8 C1153.4 704.7 1156.5 705.0 1159.3 705.0 C1162.0 705.0 1163.8 704.6 1166.4 704.5 C1169.0 704.5 1171.5 704.6 1174.5 704.9 C1177.6 705.1 1181.1 705.7 1184.3 705.8 C1187.4 706.0 1189.7 705.8 1193.1 705.8 C1196.4 705.8 1200.7 706.0 1204.0 705.8 C1207.3 705.7 1209.7 705.0 1212.5 704.8 C1215.3 704.6 1217.7 704.7 1220.4 704.8 C1223.1 704.9 1225.1 705.2 1228.2 705.4 C1231.3 705.5 1235.5 705.7 1238.8 705.7 C1242.1 705.7 1244.5 705.6 1247.7 705.4 C1251.0 705.2 1254.5 704.6 1257.9 704.6 C1261.3 704.7 1264.2 705.6 1267.6 705.8 C1270.9 705.9 1274.5 705.7 1277.7 705.6 C1280.9 705.4 1284.5 704.8 1286.6 704.7 C1288.7 704.7 1287.7 705.4 1290.0 705.2 C1292.3 705.0 1296.6 703.7 1300.0 703.6 C1303.4 703.5 1307.0 704.4 1310.2 704.4 C1313.4 704.4 1315.5 703.7 1318.8 703.7 C1322.1 703.6 1326.4 704.1 1329.6 704.1 C1332.7 704.0 1334.7 703.3 1337.3 703.4 C1339.9 703.4 1341.8 704.3 1344.9 704.3 C1347.9 704.3 1351.6 703.4 1355.1 703.4 C1358.6 703.4 1362.0 704.3 1365.4 704.4 C1368.8 704.4 1371.8 703.8 1375.0 703.6 C1378.2 703.4 1381.5 703.2 1384.2 703.4 C1387.0 703.5 1388.4 704.3 1391.3 704.4 C1394.1 704.4 1397.4 703.9 1400.9 703.8 C1404.3 703.7 1408.0 703.7 1411.6 703.7 C1415.2 703.8 1419.0 704.2 1422.1 704.2 C1425.2 704.2 1427.2 703.6 1429.9 703.5 C1432.7 703.4 1435.1 703.5 1438.1 703.5 C1441.1 703.5 1444.4 703.5 1447.5 703.5 C1450.5 703.5 1452.8 703.3 1456.1 703.4 C1459.4 703.4 1463.5 703.5 1466.8 703.6 C1470.1 703.7 1472.3 703.9 1475.6 703.9 C1478.9 703.9 1482.6 703.7 1486.2 703.7 C1489.8 703.7 1493.5 703.8 1496.9 703.8 C1500.3 703.8 1503.3 703.8 1506.0 703.8 C1508.8 703.8 1510.6 703.8 1513.1 703.7 C1515.6 703.6 1517.8 703.3 1520.8 703.2 C1523.9 703.2 1527.8 703.3 1531.0 703.4 C1534.3 703.6 1536.8 704.0 1539.9 704.1 C1543.0 704.1 1546.0 703.6 1549.1 703.6 C1552.3 703.6 1554.9 703.9 1558.2 703.9 C1561.5 703.8 1565.1 703.4 1568.4 703.3 C1571.6 703.3 1574.6 703.4 1577.6 703.5 C1580.5 703.6 1582.8 704.1 1585.7 704.1 C1588.6 704.2 1591.5 703.8 1594.7 703.9 C1598.0 703.9 1601.6 704.3 1604.8 704.3 C1608.0 704.3 1610.5 704.0 1613.5 703.9 C1616.6 703.9 1619.4 703.8 1622.6 703.8 C1625.8 703.8 1629.1 703.7 1632.3 703.7 C1635.6 703.7 1638.1 703.7 1641.5 703.8 C1644.9 703.8 1648.6 703.9 1652.2 704.0 C1655.9 704.1 1659.6 704.4 1662.7 704.3 C1665.9 704.3 1667.6 703.9 1670.8 703.9 C1674.0 703.9 1678.4 704.3 1681.6 704.2 C1684.7 704.1 1686.3 703.5 1689.1 703.3 C1691.9 703.2 1695.0 703.3 1697.9 703.3 C1700.7 703.3 1702.8 703.1 1705.8 703.3 C1708.8 703.4 1712.1 704.1 1715.5 704.1 C1719.0 704.2 1722.6 703.4 1726.1 703.4 C1729.6 703.4 1733.0 703.8 1736.0 704.0 C1738.9 704.1 1740.4 704.3 1743.5 704.3 C1746.7 704.2 1750.7 703.6 1754.4 703.5 C1758.1 703.4 1761.9 703.5 1765.2 703.7 C1768.6 703.8 1770.9 704.4 1774.2 704.4 C1777.4 704.3 1781.3 703.5 1784.5 703.4 C1787.7 703.3 1790.3 703.8 1793.2 703.8 C1796.1 703.8 1798.8 703.4 1801.6 703.4 C1804.4 703.5 1807.9 704.0 1809.9 704.1 C1811.8 704.1 1812.5 703.8 1813.0 703.8" fill="none" stroke="#f8e450" stroke-width="1.8" stroke-linejoin="round"/><path d="M365.0 778.9 C366.8 778.7 372.2 777.9 375.8 777.9 C379.3 778.0 382.5 779.0 386.1 779.0 C389.7 779.0 393.1 778.0 397.1 778.0 C401.2 778.1 405.7 779.3 410.1 779.3 C414.5 779.3 419.1 778.3 423.0 778.1 C426.9 777.9 429.3 777.9 433.0 778.0 C436.8 778.0 441.5 778.3 445.1 778.4 C448.8 778.5 450.9 778.5 454.7 778.7 C458.4 778.8 463.5 779.5 467.3 779.4 C471.2 779.3 473.5 778.2 477.3 778.2 C481.2 778.1 485.9 778.9 490.0 778.9 C494.2 778.9 498.2 778.0 501.8 778.1 C505.4 778.1 507.7 779.1 511.0 779.1 C514.4 779.1 517.8 778.0 521.8 778.0 C525.7 778.0 530.3 779.0 534.5 779.0 C538.7 779.0 542.5 778.2 546.7 778.1 C550.9 777.9 554.9 777.9 559.1 778.0 C563.4 778.1 567.7 778.6 571.6 778.7 C575.5 778.9 578.0 779.0 581.9 778.9 C585.9 778.8 590.9 778.4 594.6 778.4 C598.4 778.4 600.9 778.9 604.2 778.8 C607.5 778.8 610.8 778.2 614.1 778.1 C617.5 778.0 620.5 777.9 623.8 778.0 C627.1 778.1 630.2 778.2 633.6 778.5 C637.0 778.7 640.3 779.2 643.8 779.3 C647.3 779.3 650.6 778.9 654.0 778.8 C657.3 778.7 660.5 778.6 663.7 778.5 C666.9 778.4 669.7 778.2 672.7 778.4 C675.8 778.5 678.4 779.2 681.8 779.2 C685.2 779.2 689.2 778.2 693.0 778.2 C696.8 778.3 700.4 779.4 703.9 779.6 C707.4 779.8 709.9 779.5 713.3 779.4 C716.8 779.2 720.1 778.9 724.1 778.8 C728.0 778.7 732.4 778.5 736.4 778.6 C740.4 778.7 743.3 779.2 747.4 779.1 C751.5 779.1 756.1 778.5 760.4 778.5 C764.6 778.5 768.6 779.2 772.7 779.2 C776.7 779.2 780.5 778.8 784.2 778.6 C788.0 778.4 791.2 778.1 794.6 778.0 C798.0 777.9 800.5 778.0 804.1 778.0 C807.8 778.1 812.4 778.4 816.1 778.4 C819.8 778.4 822.0 777.9 825.7 778.1 C829.5 778.2 834.0 779.4 838.1 779.5 C842.2 779.5 846.1 778.6 849.8 778.4 C853.5 778.2 856.2 778.5 859.8 778.4 C863.3 778.4 866.9 778.2 870.6 778.2 C874.3 778.2 877.4 778.1 881.4 778.4 C885.4 778.6 890.1 779.7 894.2 779.7 C898.3 779.6 901.3 778.5 905.4 778.3 C909.5 778.1 914.3 778.5 918.3 778.5 C922.2 778.4 925.1 777.9 928.7 777.9 C932.3 778.0 935.6 778.7 939.2 778.8 C942.9 778.8 946.5 778.4 950.2 778.3 C954.0 778.1 957.7 777.9 961.3 777.9 C964.9 777.9 967.8 778.1 971.3 778.1 C974.8 778.1 978.6 777.9 981.9 778.0 C985.3 778.0 987.8 778.3 991.0 778.4 C994.2 778.6 997.4 778.8 1000.9 779.0 C1004.5 779.1 1008.2 779.2 1012.1 779.3 C1015.9 779.3 1019.6 779.3 1023.7 779.2 C1027.8 779.1 1032.3 778.5 1036.2 778.6 C1040.1 778.7 1043.1 779.6 1046.5 779.7 C1049.9 779.8 1052.5 779.5 1056.1 779.2 C1059.7 778.9 1063.6 777.9 1067.7 778.0 C1071.7 778.0 1076.0 779.3 1080.0 779.5 C1084.1 779.7 1087.5 779.5 1091.5 779.2 C1095.6 779.0 1099.8 778.2 1103.8 778.2 C1107.8 778.1 1110.9 778.6 1114.9 778.8 C1118.9 779.0 1123.0 779.3 1127.2 779.3 C1131.4 779.4 1135.3 779.0 1139.5 779.0 C1143.8 778.9 1148.0 779.2 1152.1 779.1 C1156.2 779.0 1160.3 778.5 1163.9 778.3 C1167.4 778.1 1169.7 778.2 1173.0 778.1 C1176.3 778.1 1179.6 778.0 1183.4 778.1 C1187.3 778.2 1191.7 778.7 1195.8 778.9 C1199.8 779.1 1203.3 779.0 1207.3 779.0 C1211.2 779.0 1215.5 778.7 1219.0 778.8 C1222.5 778.8 1224.5 779.3 1228.0 779.3 C1231.6 779.3 1236.1 778.8 1240.0 778.8 C1244.0 778.8 1247.7 779.0 1251.2 779.1 C1254.6 779.2 1257.1 779.4 1260.4 779.2 C1263.7 779.0 1267.0 778.0 1270.4 778.0 C1273.8 778.0 1277.1 779.0 1280.5 779.2 C1283.9 779.4 1286.5 779.3 1290.3 779.2 C1294.2 779.2 1299.2 778.9 1303.2 778.8 C1307.2 778.7 1310.0 778.7 1313.7 778.8 C1317.5 778.8 1321.5 779.2 1325.5 779.3 C1329.4 779.3 1333.4 779.2 1337.0 779.1 C1340.5 778.9 1343.0 778.1 1346.3 778.2 C1349.5 778.2 1352.8 779.1 1356.3 779.2 C1359.7 779.4 1363.2 779.1 1366.5 778.9 C1369.8 778.7 1372.3 778.0 1375.5 778.0 C1378.8 778.0 1381.9 778.9 1385.6 779.1 C1389.3 779.3 1393.7 779.2 1397.4 779.1 C1401.1 779.1 1404.0 778.9 1407.6 778.8 C1411.1 778.8 1415.0 778.6 1418.4 778.7 C1421.9 778.9 1424.6 779.4 1427.9 779.5 C1431.2 779.7 1433.8 779.9 1437.7 779.7 C1441.5 779.4 1446.4 778.0 1450.4 777.9 C1454.4 777.9 1457.2 779.2 1461.3 779.4 C1465.3 779.5 1470.2 778.9 1474.1 778.7 C1478.0 778.5 1480.3 778.4 1484.2 778.3 C1488.1 778.2 1492.9 778.3 1497.0 778.3 C1501.1 778.3 1504.5 777.9 1508.3 778.2 C1512.1 778.4 1515.9 779.4 1519.4 779.6 C1522.9 779.8 1525.4 779.4 1528.9 779.4 C1532.4 779.4 1536.1 779.7 1540.0 779.5 C1543.9 779.3 1547.6 778.4 1551.8 778.3 C1555.9 778.2 1560.7 778.8 1564.4 778.8 C1568.1 778.7 1570.1 777.9 1573.5 777.9 C1576.9 777.9 1580.8 778.7 1584.4 778.7 C1588.0 778.8 1591.2 778.2 1594.7 778.2 C1598.2 778.1 1601.2 778.5 1605.0 778.5 C1608.9 778.4 1613.3 777.7 1617.4 777.9 C1621.5 778.1 1625.7 779.1 1629.4 779.4 C1633.0 779.7 1635.2 779.5 1638.9 779.6 C1642.5 779.6 1647.0 779.7 1650.7 779.5 C1654.5 779.4 1657.4 778.5 1660.9 778.6 C1664.4 778.6 1667.7 779.7 1671.5 779.7 C1675.2 779.7 1679.1 778.8 1682.8 778.5 C1686.6 778.3 1690.1 778.5 1693.5 778.4 C1696.9 778.3 1699.1 778.1 1702.7 778.1 C1706.4 778.1 1710.8 778.4 1715.1 778.4 C1719.3 778.5 1723.9 778.3 1727.8 778.3 C1731.7 778.4 1734.5 778.8 1737.9 778.8 C1741.2 778.9 1743.8 778.5 1747.6 778.6 C1751.5 778.7 1756.2 779.4 1760.4 779.5 C1764.7 779.6 1768.5 779.0 1772.7 779.0 C1776.9 779.1 1781.3 779.6 1785.4 779.6 C1789.4 779.6 1793.1 779.3 1796.5 779.2 C1800.0 779.1 1802.9 779.3 1805.7 779.2 C1808.5 779.2 1811.8 778.9 1813.0 778.8 L1813.0 866.0 L365.0 866.0 Z" fill="#b14f25"/><path d="M365.0 778.9 C366.8 778.7 372.2 777.9 375.8 777.9 C379.3 778.0 382.5 779.0 386.1 779.0 C389.7 779.0 393.1 778.0 397.1 778.0 C401.2 778.1 405.7 779.3 410.1 779.3 C414.5 779.3 419.1 778.3 423.0 778.1 C426.9 777.9 429.3 777.9 433.0 778.0 C436.8 778.0 441.5 778.3 445.1 778.4 C448.8 778.5 450.9 778.5 454.7 778.7 C458.4 778.8 463.5 779.5 467.3 779.4 C471.2 779.3 473.5 778.2 477.3 778.2 C481.2 778.1 485.9 778.9 490.0 778.9 C494.2 778.9 498.2 778.0 501.8 778.1 C505.4 778.1 507.7 779.1 511.0 779.1 C514.4 779.1 517.8 778.0 521.8 778.0 C525.7 778.0 530.3 779.0 534.5 779.0 C538.7 779.0 542.5 778.2 546.7 778.1 C550.9 777.9 554.9 777.9 559.1 778.0 C563.4 778.1 567.7 778.6 571.6 778.7 C575.5 778.9 578.0 779.0 581.9 778.9 C585.9 778.8 590.9 778.4 594.6 778.4 C598.4 778.4 600.9 778.9 604.2 778.8 C607.5 778.8 610.8 778.2 614.1 778.1 C617.5 778.0 620.5 777.9 623.8 778.0 C627.1 778.1 630.2 778.2 633.6 778.5 C637.0 778.7 640.3 779.2 643.8 779.3 C647.3 779.3 650.6 778.9 654.0 778.8 C657.3 778.7 660.5 778.6 663.7 778.5 C666.9 778.4 669.7 778.2 672.7 778.4 C675.8 778.5 678.4 779.2 681.8 779.2 C685.2 779.2 689.2 778.2 693.0 778.2 C696.8 778.3 700.4 779.4 703.9 779.6 C707.4 779.8 709.9 779.5 713.3 779.4 C716.8 779.2 720.1 778.9 724.1 778.8 C728.0 778.7 732.4 778.5 736.4 778.6 C740.4 778.7 743.3 779.2 747.4 779.1 C751.5 779.1 756.1 778.5 760.4 778.5 C764.6 778.5 768.6 779.2 772.7 779.2 C776.7 779.2 780.5 778.8 784.2 778.6 C788.0 778.4 791.2 778.1 794.6 778.0 C798.0 777.9 800.5 778.0 804.1 778.0 C807.8 778.1 812.4 778.4 816.1 778.4 C819.8 778.4 822.0 777.9 825.7 778.1 C829.5 778.2 834.0 779.4 838.1 779.5 C842.2 779.5 846.1 778.6 849.8 778.4 C853.5 778.2 856.2 778.5 859.8 778.4 C863.3 778.4 866.9 778.2 870.6 778.2 C874.3 778.2 877.4 778.1 881.4 778.4 C885.4 778.6 890.1 779.7 894.2 779.7 C898.3 779.6 901.3 778.5 905.4 778.3 C909.5 778.1 914.3 778.5 918.3 778.5 C922.2 778.4 925.1 777.9 928.7 777.9 C932.3 778.0 935.6 778.7 939.2 778.8 C942.9 778.8 946.5 778.4 950.2 778.3 C954.0 778.1 957.7 777.9 961.3 777.9 C964.9 777.9 967.8 778.1 971.3 778.1 C974.8 778.1 978.6 777.9 981.9 778.0 C985.3 778.0 987.8 778.3 991.0 778.4 C994.2 778.6 997.4 778.8 1000.9 779.0 C1004.5 779.1 1008.2 779.2 1012.1 779.3 C1015.9 779.3 1019.6 779.3 1023.7 779.2 C1027.8 779.1 1032.3 778.5 1036.2 778.6 C1040.1 778.7 1043.1 779.6 1046.5 779.7 C1049.9 779.8 1052.5 779.5 1056.1 779.2 C1059.7 778.9 1063.6 777.9 1067.7 778.0 C1071.7 778.0 1076.0 779.3 1080.0 779.5 C1084.1 779.7 1087.5 779.5 1091.5 779.2 C1095.6 779.0 1099.8 778.2 1103.8 778.2 C1107.8 778.1 1110.9 778.6 1114.9 778.8 C1118.9 779.0 1123.0 779.3 1127.2 779.3 C1131.4 779.4 1135.3 779.0 1139.5 779.0 C1143.8 778.9 1148.0 779.2 1152.1 779.1 C1156.2 779.0 1160.3 778.5 1163.9 778.3 C1167.4 778.1 1169.7 778.2 1173.0 778.1 C1176.3 778.1 1179.6 778.0 1183.4 778.1 C1187.3 778.2 1191.7 778.7 1195.8 778.9 C1199.8 779.1 1203.3 779.0 1207.3 779.0 C1211.2 779.0 1215.5 778.7 1219.0 778.8 C1222.5 778.8 1224.5 779.3 1228.0 779.3 C1231.6 779.3 1236.1 778.8 1240.0 778.8 C1244.0 778.8 1247.7 779.0 1251.2 779.1 C1254.6 779.2 1257.1 779.4 1260.4 779.2 C1263.7 779.0 1267.0 778.0 1270.4 778.0 C1273.8 778.0 1277.1 779.0 1280.5 779.2 C1283.9 779.4 1286.5 779.3 1290.3 779.2 C1294.2 779.2 1299.2 778.9 1303.2 778.8 C1307.2 778.7 1310.0 778.7 1313.7 778.8 C1317.5 778.8 1321.5 779.2 1325.5 779.3 C1329.4 779.3 1333.4 779.2 1337.0 779.1 C1340.5 778.9 1343.0 778.1 1346.3 778.2 C1349.5 778.2 1352.8 779.1 1356.3 779.2 C1359.7 779.4 1363.2 779.1 1366.5 778.9 C1369.8 778.7 1372.3 778.0 1375.5 778.0 C1378.8 778.0 1381.9 778.9 1385.6 779.1 C1389.3 779.3 1393.7 779.2 1397.4 779.1 C1401.1 779.1 1404.0 778.9 1407.6 778.8 C1411.1 778.8 1415.0 778.6 1418.4 778.7 C1421.9 778.9 1424.6 779.4 1427.9 779.5 C1431.2 779.7 1433.8 779.9 1437.7 779.7 C1441.5 779.4 1446.4 778.0 1450.4 777.9 C1454.4 777.9 1457.2 779.2 1461.3 779.4 C1465.3 779.5 1470.2 778.9 1474.1 778.7 C1478.0 778.5 1480.3 778.4 1484.2 778.3 C1488.1 778.2 1492.9 778.3 1497.0 778.3 C1501.1 778.3 1504.5 777.9 1508.3 778.2 C1512.1 778.4 1515.9 779.4 1519.4 779.6 C1522.9 779.8 1525.4 779.4 1528.9 779.4 C1532.4 779.4 1536.1 779.7 1540.0 779.5 C1543.9 779.3 1547.6 778.4 1551.8 778.3 C1555.9 778.2 1560.7 778.8 1564.4 778.8 C1568.1 778.7 1570.1 777.9 1573.5 777.9 C1576.9 777.9 1580.8 778.7 1584.4 778.7 C1588.0 778.8 1591.2 778.2 1594.7 778.2 C1598.2 778.1 1601.2 778.5 1605.0 778.5 C1608.9 778.4 1613.3 777.7 1617.4 777.9 C1621.5 778.1 1625.7 779.1 1629.4 779.4 C1633.0 779.7 1635.2 779.5 1638.9 779.6 C1642.5 779.6 1647.0 779.7 1650.7 779.5 C1654.5 779.4 1657.4 778.5 1660.9 778.6 C1664.4 778.6 1667.7 779.7 1671.5 779.7 C1675.2 779.7 1679.1 778.8 1682.8 778.5 C1686.6 778.3 1690.1 778.5 1693.5 778.4 C1696.9 778.3 1699.1 778.1 1702.7 778.1 C1706.4 778.1 1710.8 778.4 1715.1 778.4 C1719.3 778.5 1723.9 778.3 1727.8 778.3 C1731.7 778.4 1734.5 778.8 1737.9 778.8 C1741.2 778.9 1743.8 778.5 1747.6 778.6 C1751.5 778.7 1756.2 779.4 1760.4 779.5 C1764.7 779.6 1768.5 779.0 1772.7 779.0 C1776.9 779.1 1781.3 779.6 1785.4 779.6 C1789.4 779.6 1793.1 779.3 1796.5 779.2 C1800.0 779.1 1802.9 779.3 1805.7 779.2 C1808.5 779.2 1811.8 778.9 1813.0 778.8" fill="none" stroke="#b5502a" stroke-width="1.0" stroke-linejoin="round"/><path d="M365.0 859.0 C611.2 859.0 1566.8 859.0 1813.0 859.0 L1813.0 866.0 L365.0 866.0 Z" fill="#bc4f29"/><path d="M365.0 859.0 C611.2 859.0 1566.8 859.0 1813.0 859.0" fill="none" stroke="#a84a28" stroke-width="0.8" stroke-linejoin="round"/><path d="M365 866.5 H1831" stroke="#39406a" stroke-width="1"/><path d="M381.5 867 V876.5" stroke="#39406a" stroke-width="1"/><text x="367.5" y="885.3" font-size="11.5" fill="#b9c0ec" textLength="30" lengthAdjust="spacing">12:00</text><path d="M485.5 867 V876.5" stroke="#39406a" stroke-width="1"/><text x="469.9" y="885.3" font-size="11.5" fill="#b9c0ec" textLength="33.3" lengthAdjust="spacing">13. Jul</text><path d="M590.5 867 V876.5" stroke="#39406a" stroke-width="1"/><text x="575.7" y="885.3" font-size="11.5" fill="#b9c0ec" textLength="30" lengthAdjust="spacing">12:00</text><path d="M694.5 867 V876.5" stroke="#39406a" stroke-width="1"/><text x="678.1" y="885.3" font-size="11.5" fill="#b9c0ec" textLength="33.3" lengthAdjust="spacing">14. Jul</text><path d="M798.5 867 V876.5" stroke="#39406a" stroke-width="1"/><text x="783.9" y="885.3" font-size="11.5" fill="#b9c0ec" textLength="30" lengthAdjust="spacing">12:00</text><path d="M902.5 867 V876.5" stroke="#39406a" stroke-width="1"/><text x="886.4" y="885.3" font-size="11.5" fill="#b9c0ec" textLength="33.3" lengthAdjust="spacing">15. Jul</text><path d="M1006.5 867 V876.5" stroke="#39406a" stroke-width="1"/><text x="992.1" y="885.3" font-size="11.5" fill="#b9c0ec" textLength="30" lengthAdjust="spacing">12:00</text><path d="M1110.5 867 V876.5" stroke="#39406a" stroke-width="1"/><text x="1094.5" y="885.3" font-size="11.5" fill="#b9c0ec" textLength="33.3" lengthAdjust="spacing">16. Jul</text><path d="M1214.5 867 V876.5" stroke="#39406a" stroke-width="1"/><text x="1200.3" y="885.3" font-size="11.5" fill="#b9c0ec" textLength="30" lengthAdjust="spacing">12:00</text><path d="M1318.5 867 V876.5" stroke="#39406a" stroke-width="1"/><text x="1302.8" y="885.3" font-size="11.5" fill="#b9c0ec" textLength="33.3" lengthAdjust="spacing">17. Jul</text><path d="M1422.5 867 V876.5" stroke="#39406a" stroke-width="1"/><text x="1408.5" y="885.3" font-size="11.5" fill="#b9c0ec" textLength="30" lengthAdjust="spacing">12:00</text><path d="M1526.5 867 V876.5" stroke="#39406a" stroke-width="1"/><text x="1510.9" y="885.3" font-size="11.5" fill="#b9c0ec" textLength="33.3" lengthAdjust="spacing">18. Jul</text><path d="M1630.5 867 V876.5" stroke="#39406a" stroke-width="1"/><text x="1616.7" y="885.3" font-size="11.5" fill="#b9c0ec" textLength="30" lengthAdjust="spacing">12:00</text><path d="M1735.5 867 V876.5" stroke="#39406a" stroke-width="1"/><text x="1719.1" y="885.3" font-size="11.5" fill="#b9c0ec" textLength="33.3" lengthAdjust="spacing">19. Jul</text><text x="365" y="276" font-size="11.5" fill="#fff" stroke="#fff" stroke-width="0.35" textLength="33" lengthAdjust="spacing">Zoom</text><rect x="403" y="261.3" width="32" height="21.8" fill="#2e3356"/><text x="419.4" y="274.6" font-size="11.5" fill="#fff" stroke="#fff" stroke-width="0.3" text-anchor="middle" letter-spacing="0.8">30m</text><rect x="440" y="261.3" width="32" height="21.8" fill="#2e3356"/><text x="456.4" y="274.6" font-size="11.5" fill="#fff" stroke="#fff" stroke-width="0.3" text-anchor="middle" letter-spacing="0.8">1h</text><rect x="477" y="261.3" width="32" height="21.8" fill="#2e3356"/><text x="493.4" y="274.6" font-size="11.5" fill="#fff" stroke="#fff" stroke-width="0.3" text-anchor="middle" letter-spacing="0.8">1d</text><rect x="514" y="261.3" width="32" height="21.8" fill="#99a4d6"/><text x="530.4" y="274.6" font-size="11.5" fill="#fff" stroke="#fff" stroke-width="0.7" text-anchor="middle" letter-spacing="0.8">w</text><rect x="551" y="261.3" width="32" height="21.8" fill="#2e3356"/><text x="567.4" y="274.6" font-size="11.5" fill="#fff" stroke="#fff" stroke-width="0.3" text-anchor="middle" letter-spacing="0.8">2w</text><rect x="588" y="261.3" width="32" height="21.8" fill="#2e3356"/><text x="604.4" y="274.6" font-size="11.5" fill="#fff" stroke="#fff" stroke-width="0.3" text-anchor="middle" letter-spacing="0.8">1m</text><rect x="625" y="261.3" width="32" height="21.8" fill="#2e3356"/><text x="641.4" y="274.6" font-size="11.5" fill="#fff" stroke="#fff" stroke-width="0.3" text-anchor="middle" letter-spacing="0.8">3m</text><text x="1124.5" y="214" font-size="16.5" fill="#fff" text-anchor="middle" textLength="121" lengthAdjust="spacing">JVM 메모리 비교</text><text x="1124.5" y="241.5" font-size="12" fill="#57659d" text-anchor="middle" textLength="223" lengthAdjust="spacing">차트에 표시되는 값이 낮을수록 좋습니다.</text><rect x="1861.4" y="203.6" width="24.4" height="22" rx="2" fill="#505050"/><rect x="1865.8" y="208.6" width="16.6" height="2.8" rx="1" fill="#f4f4f4"/><rect x="1865.8" y="213.2" width="16.6" height="2.8" rx="1" fill="#f4f4f4"/><rect x="1865.8" y="217.8" width="16.6" height="2.8" rx="1" fill="#f4f4f4"/><path d="M365 918.5 H1820" stroke="#353b5f" stroke-width="1"/><path d="M512.5 919 V958" stroke="#353b5f" stroke-width="1"/><path d="M734.5 919 V958" stroke="#353b5f" stroke-width="1"/><path d="M956.5 919 V958" stroke="#353b5f" stroke-width="1"/><path d="M1177.5 919 V958" stroke="#353b5f" stroke-width="1"/><path d="M1399.5 919 V958" stroke="#353b5f" stroke-width="1"/><path d="M1620.5 919 V958" stroke="#353b5f" stroke-width="1"/><rect x="1690" y="919" width="112" height="39" fill="#3a4062"/><text x="516.9" y="954.4" font-size="11" fill="#8d90a6" textLength="39" lengthAdjust="spacing">29. Apr</text><text x="738.5" y="954.4" font-size="11" fill="#8d90a6" textLength="42" lengthAdjust="spacing">13. May</text><text x="960.1" y="954.4" font-size="11" fill="#8d90a6" textLength="42" lengthAdjust="spacing">27. May</text><text x="1181.7" y="954.4" font-size="11" fill="#8d90a6" textLength="37" lengthAdjust="spacing">10. Jun</text><text x="1403.3" y="954.4" font-size="11" fill="#8d90a6" textLength="37" lengthAdjust="spacing">24. Jun</text><text x="1624.9" y="954.4" font-size="11" fill="#6c7190" textLength="26.5" lengthAdjust="spacing">8. Jul</text><path d="M1613.0 952.0 L1616.2 954.7 L1621.9 953.8 L1631.2 951.0 L1638.8 949.6 L1643.4 946.2 L1648.0 943.8 L1653.8 943.0 L1672.5 942.0 L1691.2 940.6 L1710.0 939.7 L1731.6 938.8 L1738.0 936.0 L1744.7 932.8 L1751.2 932.2 L1758.8 929.4 L1763.4 929.0 L1768.0 925.6 L1772.8 922.8 L1777.5 921.9 L1799.0 921.1" fill="none" stroke="#8ea0c4" stroke-width="1.1"/><rect x="364" y="958.5" width="1456.5" height="14" fill="#32375a"/><rect x="364" y="958.5" width="15" height="14" fill="#5f5f66"/><path d="M373 963 V968 L369.8 965.5 Z" fill="#e4e4e4"/><rect x="1690" y="958.5" width="112" height="14" fill="#6f7aaa"/><path d="M1743 961.5 V967 M1746 961.5 V967 M1749 961.5 V967" stroke="#dfe3f5" stroke-width="1"/><rect x="1806" y="958.5" width="14.6" height="14" fill="#66666c"/><path d="M1812 963 V968 L1815.2 965.5 Z" fill="#3a3a3a"/><rect x="1686.0" y="930.5" width="8" height="15.5" fill="#6b6b6b" stroke="#a0a0a0" stroke-width="1"/><path d="M1688.8 934.5 V942 M1691.2 934.5 V942" stroke="#cfcfcf" stroke-width="0.7"/><rect x="1798.0" y="930.5" width="8" height="15.5" fill="#6b6b6b" stroke="#a0a0a0" stroke-width="1"/><path d="M1800.8 934.5 V942 M1803.2 934.5 V942" stroke="#cfcfcf" stroke-width="0.7"/><rect x="397" y="989" width="16" height="12" fill="#22c13e"/><text x="418" y="999.6" font-size="12" font-weight="700" fill="#dcdce6" textLength="84" lengthAdjust="spacing" style="paint-order:stroke;stroke:#05061a;stroke-width:1.6px;stroke-linejoin:round">api–11–bn8bk</text><rect x="525" y="989" width="16" height="12" fill="#f58537"/><text x="546" y="999.6" font-size="12" font-weight="700" fill="#dcdce6" textLength="82" lengthAdjust="spacing" style="paint-order:stroke;stroke:#05061a;stroke-width:1.6px;stroke-linejoin:round">api–11–nq6qr</text><rect x="650" y="989" width="16" height="12" fill="#5b5be8"/><text x="671" y="999.6" font-size="12" font-weight="700" fill="#dcdce6" textLength="57" lengthAdjust="spacing" style="paint-order:stroke;stroke:#05061a;stroke-width:1.6px;stroke-linejoin:round">eap74–12</text><rect x="750" y="989" width="16" height="12" fill="#e61c86"/><text x="771" y="999.6" font-size="12" font-weight="700" fill="#dcdce6" textLength="58" lengthAdjust="spacing" style="paint-order:stroke;stroke:#05061a;stroke-width:1.6px;stroke-linejoin:round">eap74–22</text><rect x="851" y="989" width="16" height="12" fill="#e9d052"/><text x="872" y="999.6" font-size="12" font-weight="700" fill="#dcdce6" textLength="99" lengthAdjust="spacing" style="paint-order:stroke;stroke:#05061a;stroke-width:1.6px;stroke-linejoin:round">front–12–46hmg</text><rect x="992" y="989" width="16" height="12" fill="#8c8cf0"/><text x="1013" y="999.6" font-size="12" font-weight="700" fill="#dcdce6" textLength="101" lengthAdjust="spacing" style="paint-order:stroke;stroke:#05061a;stroke-width:1.6px;stroke-linejoin:round">front–12–pmw75</text><rect x="1135" y="989" width="16" height="12" fill="#1c3cf0"/><text x="1156" y="999.6" font-size="12" font-weight="700" fill="#dcdce6" textLength="109.5" lengthAdjust="spacing" style="paint-order:stroke;stroke:#05061a;stroke-width:1.6px;stroke-linejoin:round">gateway–14–2jx8c</text><rect x="1287" y="989" width="16" height="12" fill="#5cb8f8"/><text x="1308" y="999.6" font-size="12" font-weight="700" fill="#dcdce6" textLength="112" lengthAdjust="spacing" style="paint-order:stroke;stroke:#05061a;stroke-width:1.6px;stroke-linejoin:round">gateway–14–qvc8k</text><rect x="1442" y="989" width="16" height="12" fill="#686c88"/><text x="1463" y="999.6" font-size="12" font-weight="700" fill="#dcdce6" textLength="72" lengthAdjust="spacing" style="paint-order:stroke;stroke:#05061a;stroke-width:1.6px;stroke-linejoin:round">infinispan–0</text><rect x="1558" y="989" width="16" height="12" fill="#8de87e"/><text x="1579" y="999.6" font-size="12" font-weight="700" fill="#dcdce6" textLength="72" lengthAdjust="spacing" style="paint-order:stroke;stroke:#05061a;stroke-width:1.6px;stroke-linejoin:round">infinispan–0</text><rect x="1673" y="989" width="16" height="12" fill="#004a0c"/><text x="1694" y="999.6" font-size="12" font-weight="700" fill="#dcdce6" textLength="71" lengthAdjust="spacing" style="paint-order:stroke;stroke:#05061a;stroke-width:1.6px;stroke-linejoin:round">infinispan–1</text><rect x="1787" y="989" width="16" height="12" fill="#f4452f"/><text x="1808" y="999.6" font-size="12" font-weight="700" fill="#dcdce6" textLength="43" lengthAdjust="spacing" style="paint-order:stroke;stroke:#05061a;stroke-width:1.6px;stroke-linejoin:round">khan11</text><rect x="397" y="1007" width="16" height="12" fill="#b04a22"/><text x="418" y="1017.6" font-size="12" font-weight="700" fill="#dcdce6" textLength="44" lengthAdjust="spacing" style="paint-order:stroke;stroke:#05061a;stroke-width:1.6px;stroke-linejoin:round">khan12</text><rect x="483" y="1007" width="16" height="12" fill="#f8e84e"/><text x="504" y="1017.6" font-size="12" font-weight="700" fill="#dcdce6" textLength="110" lengthAdjust="spacing" style="paint-order:stroke;stroke:#05061a;stroke-width:1.6px;stroke-linejoin:round">onnara–34–74zmk</text><rect x="637" y="1007" width="16" height="12" fill="#b84a26"/><text x="658" y="1017.6" font-size="12" font-weight="700" fill="#dcdce6" textLength="107" lengthAdjust="spacing" style="paint-order:stroke;stroke:#05061a;stroke-width:1.6px;stroke-linejoin:round">onnara–68–8db4h</text><rect x="787" y="1007" width="16" height="12" fill="#004a0c"/><text x="808" y="1017.6" font-size="12" font-weight="700" fill="#dcdce6" textLength="154" lengthAdjust="spacing" style="paint-order:stroke;stroke:#05061a;stroke-width:1.6px;stroke-linejoin:round">test–j–77bf8564f4–msvbd</text><rect x="984" y="1007" width="16" height="12" fill="#f44336"/><text x="1005" y="1017.6" font-size="12" font-weight="700" fill="#dcdce6" textLength="159" lengthAdjust="spacing" style="paint-order:stroke;stroke:#05061a;stroke-width:1.6px;stroke-linejoin:round">testapp–6f8cd67b94–fj2gq</text><rect x="1185" y="1007" width="16" height="12" fill="#b84a26"/><text x="1206" y="1017.6" font-size="12" font-weight="700" fill="#dcdce6" textLength="131" lengthAdjust="spacing" style="paint-order:stroke;stroke:#05061a;stroke-width:1.6px;stroke-linejoin:round">vm–document–onnara</text><rect x="1797" y="1003.8" width="13" height="13" rx="2" fill="#1a73e8"/><path d="M1799.8 1010.4 L1802.6 1013.2 L1807.4 1007.2" fill="none" stroke="#fff" stroke-width="2"/><text x="1817" y="1014" font-size="13" fill="#fff" textLength="51" lengthAdjust="spacing">Show All</text><rect x="354" y="247.5" width="309.6" height="46.5" fill="none" stroke="#ff0000" stroke-width="2"/><rect x="876.5" y="139" width="176" height="43" fill="none" stroke="#ff0000" stroke-width="2"/><rect x="354.3" y="894" width="1488.7" height="83.3" fill="none" stroke="#ff0000" stroke-width="2"/><rect x="1008" y="421" width="262.5" height="467.5" fill="none" stroke="#ffff00" stroke-width="3" stroke-dasharray="24 9"/><rect x="1616" y="905.5" width="203.7" height="62" fill="none" stroke="#ffff00" stroke-width="3" stroke-dasharray="24 9"/><circle cx="353.75" cy="243.75" r="18.75" fill="#ff0000"/><text x="353.75" y="251.75" font-size="22.5" fill="#fff" text-anchor="middle">1</text><circle cx="876.75" cy="135.75" r="18.75" fill="#ff0000"/><text x="876.75" y="143.75" font-size="22.5" fill="#fff" text-anchor="middle">2</text><circle cx="353.6" cy="894" r="18.75" fill="#ff0000"/><text x="353.6" y="902" font-size="22.5" fill="#fff" text-anchor="middle">3</text><circle cx="1007.5" cy="420.6" r="18.75" fill="#ff0000"/><text x="1007.5" y="428.6" font-size="22.5" fill="#fff" text-anchor="middle">4</text><circle cx="1612" cy="902" r="18.75" fill="#ff0000"/><text x="1612" y="910" font-size="22.5" fill="#fff" text-anchor="middle">4</text><path d="M330 1061.5 H1920" stroke="#262b4c" stroke-width="1"/><text x="340" y="1075.6" font-size="10" fill="#e6e6ee" textLength="427" lengthAdjust="spacing">OPENMARU, Inc. © 2016, All Rights Reserved. Version : 5.1.0, Build : 13138, Time : 2024-07-17 17:03:23</text><path d="M773.5 1066.5 V1077" stroke="#e6e6ee" stroke-width="1.2"/><text x="780.5" y="1075.6" font-size="10" fill="#e6e6ee" textLength="118" lengthAdjust="spacing">[User Guide] [Quick Service]</text></svg>
</body></html>
